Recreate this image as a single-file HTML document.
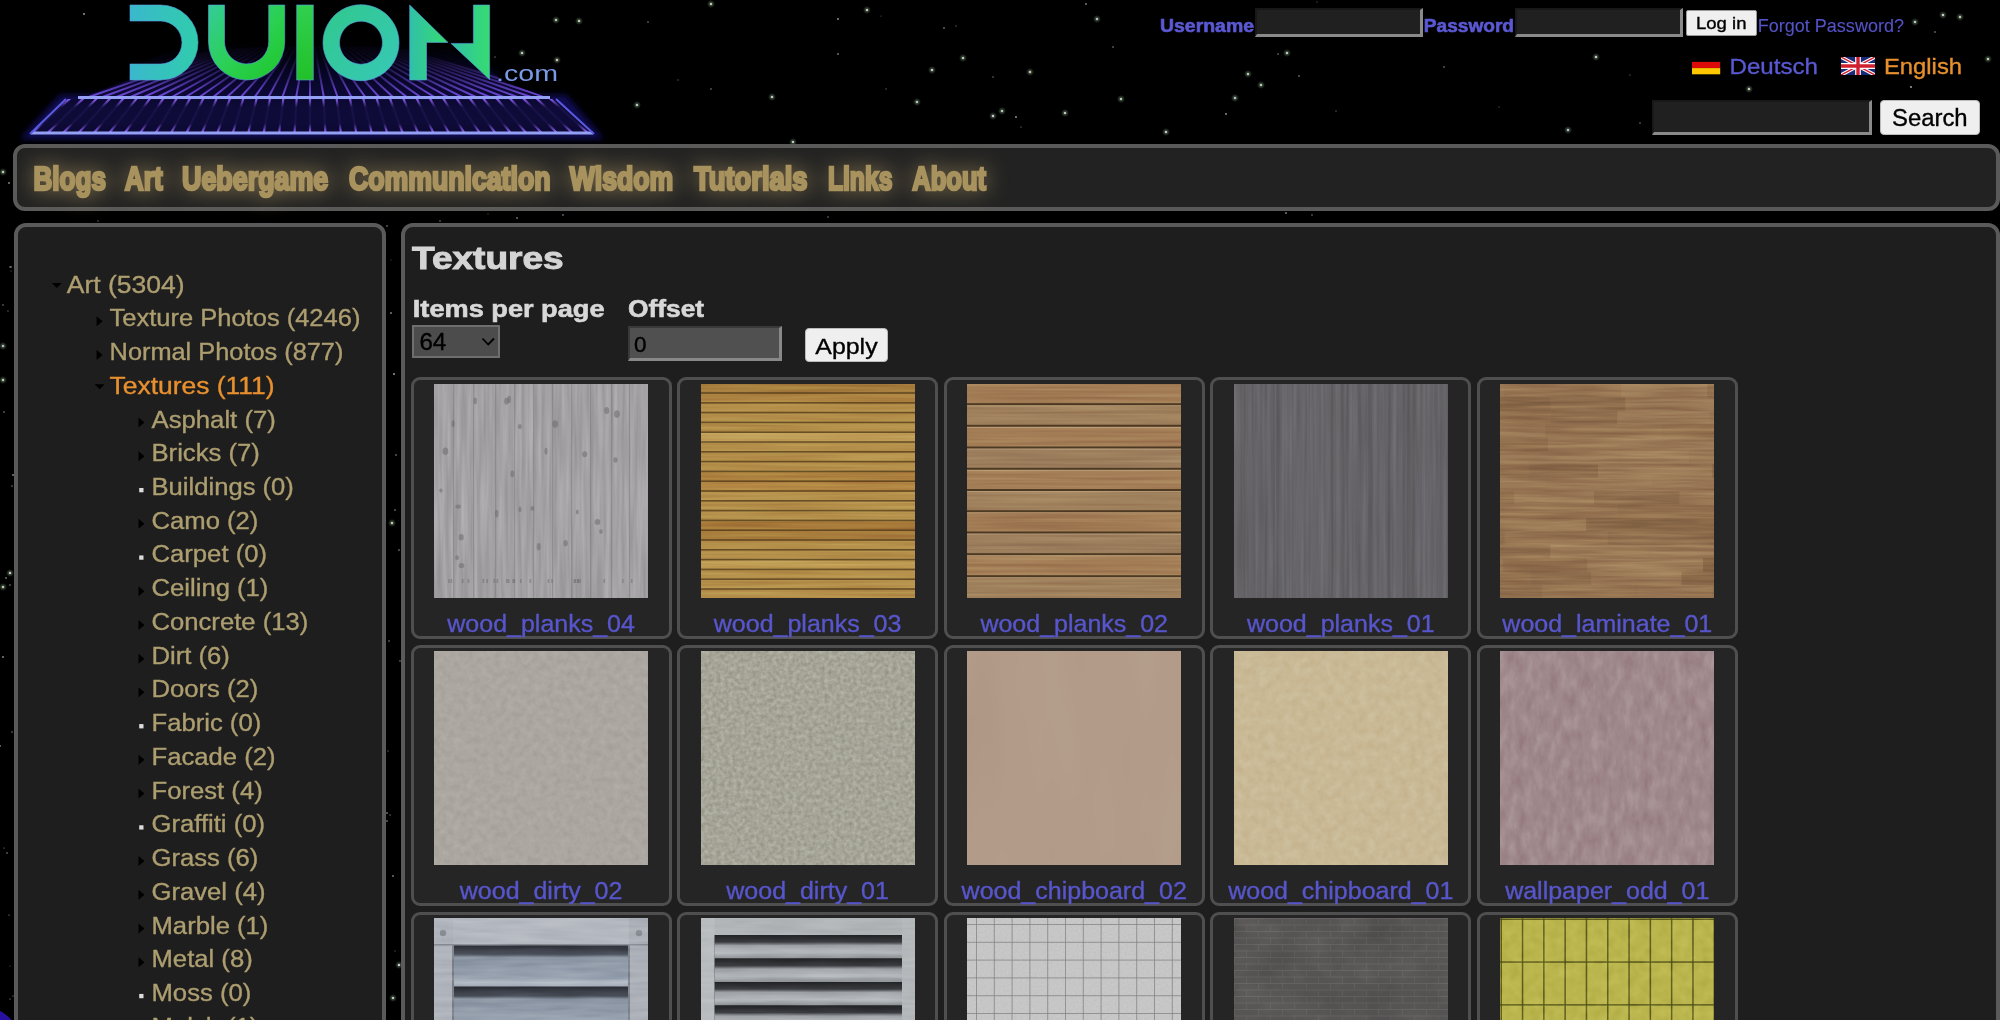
<!DOCTYPE html>
<html><head><meta charset="utf-8"><title>DUION - Textures</title>
<style>
html,body{margin:0;padding:0;}
body{width:2000px;height:1020px;overflow:hidden;background:#000;position:relative;font-family:"Liberation Sans",sans-serif;}
.abs{position:absolute;}
.panel{position:absolute;box-sizing:border-box;border:4px solid #5a5a5a;border-radius:12px;background:#1e1e1e;}
.inp{position:absolute;box-sizing:border-box;background:#202020;border-style:solid;border-width:2px 3px 3px 2px;border-color:#181818 #8a8a8a #8a8a8a #181818;}
.btn{position:absolute;box-sizing:border-box;background:#efefef;border:1px solid #bbb;border-radius:4px;}
.card{position:absolute;box-sizing:border-box;width:261.2px;height:261.5px;border:3px solid #4f4f4f;border-radius:9px;background:#252525;}
.img{position:absolute;width:214px;height:214px;}
svg text{font-family:"Liberation Sans",sans-serif;}

.t1{background:#a5a3a4;}
.t2{background:#b08a42;}
.t3{background:#b48c62;}
.t4{background:#6c6a6c;}
.t5{background:#a07c56;}
.t6{background:#aaa59e;}
.t7{background:#a2a294;}
.t8{background:#b89a86;}
.t9{background:#cbb995;}
.t10{background:#a48a8c;}
.t11{background:#a8aeb4;}
.t12{background:#a0a4a8;}
.t13{background:#c4c4c4;}
.t14{background:#5a5656;}
.t15{background:#b8b450;}
</style></head><body>
<svg class="abs" style="left:0;top:0" width="2000" height="1020"><defs><radialGradient id="sg"><stop offset="0" stop-color="#ffffff" stop-opacity="0.55"/><stop offset="1" stop-color="#aaffaa" stop-opacity="0"/></radialGradient></defs><circle cx="-22" cy="1050" r="45" fill="#2a10a0"/><circle cx="648" cy="22" r="0.9" fill="#ffffff" opacity="0.34"/><circle cx="1166" cy="132" r="4" fill="url(#sg)" opacity="0.8"/><circle cx="1166" cy="132" r="1.1" fill="#ffffff" opacity="0.85"/><circle cx="867" cy="10" r="4" fill="url(#sg)" opacity="0.8"/><circle cx="867" cy="10" r="1.1" fill="#fff8e0" opacity="0.85"/><circle cx="1261" cy="85" r="4" fill="url(#sg)" opacity="0.8"/><circle cx="1261" cy="85" r="1.1" fill="#d8ffd8" opacity="0.85"/><circle cx="793" cy="142" r="4" fill="url(#sg)" opacity="0.8"/><circle cx="793" cy="142" r="1.1" fill="#e8ffe0" opacity="0.85"/><circle cx="579" cy="21" r="4" fill="url(#sg)" opacity="0.8"/><circle cx="579" cy="21" r="1.1" fill="#f0ffd0" opacity="0.85"/><circle cx="1121" cy="99" r="4" fill="url(#sg)" opacity="0.8"/><circle cx="1121" cy="99" r="1.1" fill="#d8ffd8" opacity="0.85"/><circle cx="1278" cy="54" r="0.8" fill="#ffffff" opacity="0.55"/><circle cx="993" cy="77" r="0.8" fill="#fff8e0" opacity="0.48"/><circle cx="1960" cy="17" r="4" fill="url(#sg)" opacity="0.8"/><circle cx="1960" cy="17" r="1.1" fill="#f0ffd0" opacity="0.85"/><circle cx="1336" cy="111" r="0.7" fill="#f0ffd0" opacity="0.44"/><circle cx="993" cy="116" r="4" fill="url(#sg)" opacity="0.8"/><circle cx="993" cy="116" r="1.1" fill="#ffffff" opacity="0.85"/><circle cx="772" cy="97" r="4" fill="url(#sg)" opacity="0.8"/><circle cx="772" cy="97" r="1.1" fill="#fff8e0" opacity="0.85"/><circle cx="711" cy="89" r="0.9" fill="#e8ffe0" opacity="0.35"/><circle cx="495" cy="57" r="0.7" fill="#ffffff" opacity="0.46"/><circle cx="556" cy="20" r="4" fill="url(#sg)" opacity="0.8"/><circle cx="556" cy="20" r="1.1" fill="#d8ffd8" opacity="0.85"/><circle cx="557" cy="60" r="4" fill="url(#sg)" opacity="0.8"/><circle cx="557" cy="60" r="1.1" fill="#fff8e0" opacity="0.85"/><circle cx="1915" cy="22" r="4" fill="url(#sg)" opacity="0.8"/><circle cx="1915" cy="22" r="1.1" fill="#e8ffe0" opacity="0.85"/><circle cx="1317" cy="2" r="0.7" fill="#e8ffe0" opacity="0.30"/><circle cx="838" cy="54" r="0.9" fill="#e8ffe0" opacity="0.51"/><circle cx="1235" cy="98" r="4" fill="url(#sg)" opacity="0.8"/><circle cx="1235" cy="98" r="1.1" fill="#e0e8ff" opacity="0.85"/><circle cx="1596" cy="57" r="4" fill="url(#sg)" opacity="0.8"/><circle cx="1596" cy="57" r="1.1" fill="#ffffff" opacity="0.85"/><circle cx="963" cy="58" r="4" fill="url(#sg)" opacity="0.8"/><circle cx="963" cy="58" r="1.1" fill="#e8ffe0" opacity="0.85"/><circle cx="881" cy="16" r="0.6" fill="#ffffff" opacity="0.36"/><circle cx="1749" cy="89" r="4" fill="url(#sg)" opacity="0.8"/><circle cx="1749" cy="89" r="1.1" fill="#f0ffd0" opacity="0.85"/><circle cx="1911" cy="87" r="0.9" fill="#ffffff" opacity="0.70"/><circle cx="932" cy="70" r="4" fill="url(#sg)" opacity="0.8"/><circle cx="932" cy="70" r="1.1" fill="#ffffff" opacity="0.85"/><circle cx="1499" cy="107" r="0.7" fill="#e0e8ff" opacity="0.31"/><circle cx="1086" cy="4" r="0.9" fill="#e0e8ff" opacity="0.58"/><circle cx="522" cy="53" r="4" fill="url(#sg)" opacity="0.8"/><circle cx="522" cy="53" r="1.1" fill="#e8ffe0" opacity="0.85"/><circle cx="1065" cy="113" r="4" fill="url(#sg)" opacity="0.8"/><circle cx="1065" cy="113" r="1.1" fill="#e8ffe0" opacity="0.85"/><circle cx="1226" cy="114" r="0.9" fill="#e8ffe0" opacity="0.63"/><circle cx="711" cy="4" r="4" fill="url(#sg)" opacity="0.8"/><circle cx="711" cy="4" r="1.1" fill="#f0ffd0" opacity="0.85"/><circle cx="944" cy="28" r="0.8" fill="#f0ffd0" opacity="0.67"/><circle cx="956" cy="26" r="0.6" fill="#f0ffd0" opacity="0.68"/><circle cx="1444" cy="67" r="0.9" fill="#ffffff" opacity="0.37"/><circle cx="1097" cy="19" r="4" fill="url(#sg)" opacity="0.8"/><circle cx="1097" cy="19" r="1.1" fill="#e0e8ff" opacity="0.85"/><circle cx="1299" cy="76" r="1.0" fill="#fff8e0" opacity="0.38"/><circle cx="1002" cy="111" r="4" fill="url(#sg)" opacity="0.8"/><circle cx="1002" cy="111" r="1.1" fill="#d8ffd8" opacity="0.85"/><circle cx="838" cy="19" r="1.0" fill="#f0ffd0" opacity="0.56"/><circle cx="1630" cy="75" r="0.7" fill="#d8ffd8" opacity="0.36"/><circle cx="1021" cy="127" r="0.6" fill="#d8ffd8" opacity="0.62"/><circle cx="1113" cy="47" r="0.8" fill="#d8ffd8" opacity="0.61"/><circle cx="84" cy="14" r="0.9" fill="#ffffff" opacity="0.66"/><circle cx="886" cy="89" r="0.7" fill="#d8ffd8" opacity="0.41"/><circle cx="1016" cy="117" r="0.9" fill="#e8ffe0" opacity="0.65"/><circle cx="1568" cy="130" r="4" fill="url(#sg)" opacity="0.8"/><circle cx="1568" cy="130" r="1.1" fill="#e0e8ff" opacity="0.85"/><circle cx="1287" cy="53" r="4" fill="url(#sg)" opacity="0.8"/><circle cx="1287" cy="53" r="1.1" fill="#e8ffe0" opacity="0.85"/><circle cx="1935" cy="32" r="1.0" fill="#fff8e0" opacity="0.37"/><circle cx="1988" cy="59" r="4" fill="url(#sg)" opacity="0.8"/><circle cx="1988" cy="59" r="1.1" fill="#f0ffd0" opacity="0.85"/><circle cx="637" cy="105" r="4" fill="url(#sg)" opacity="0.8"/><circle cx="637" cy="105" r="1.1" fill="#d8ffd8" opacity="0.85"/><circle cx="917" cy="102" r="4" fill="url(#sg)" opacity="0.8"/><circle cx="917" cy="102" r="1.1" fill="#d8ffd8" opacity="0.85"/><circle cx="1248" cy="74" r="4" fill="url(#sg)" opacity="0.8"/><circle cx="1248" cy="74" r="1.1" fill="#e8ffe0" opacity="0.85"/><circle cx="1943" cy="15" r="4" fill="url(#sg)" opacity="0.8"/><circle cx="1943" cy="15" r="1.1" fill="#ffffff" opacity="0.85"/><circle cx="1640" cy="123" r="0.8" fill="#f0ffd0" opacity="0.51"/><circle cx="1030" cy="72" r="4" fill="url(#sg)" opacity="0.8"/><circle cx="1030" cy="72" r="1.1" fill="#f0ffd0" opacity="0.85"/><circle cx="678" cy="80" r="0.8" fill="#f0ffd0" opacity="0.32"/><circle cx="10" cy="966" r="0.6" fill="#f0ffd0" opacity="0.38"/><circle cx="4" cy="412" r="0.8" fill="#f0ffd0" opacity="0.57"/><circle cx="4" cy="848" r="0.6" fill="#ffffff" opacity="0.59"/><circle cx="8" cy="311" r="0.6" fill="#fff8e0" opacity="0.63"/><circle cx="6" cy="578" r="1.0" fill="#fff8e0" opacity="0.42"/><circle cx="3" cy="346" r="4" fill="url(#sg)" opacity="0.8"/><circle cx="3" cy="346" r="1.1" fill="#e0e8ff" opacity="0.85"/><circle cx="10" cy="267" r="0.9" fill="#ffffff" opacity="0.31"/><circle cx="9" cy="915" r="0.6" fill="#ffffff" opacity="0.64"/><circle cx="12" cy="732" r="0.9" fill="#e8ffe0" opacity="0.32"/><circle cx="3" cy="380" r="4" fill="url(#sg)" opacity="0.8"/><circle cx="3" cy="380" r="1.1" fill="#f0ffd0" opacity="0.85"/><circle cx="13" cy="996" r="0.6" fill="#e8ffe0" opacity="0.65"/><circle cx="3" cy="305" r="0.8" fill="#ffffff" opacity="0.50"/><circle cx="3" cy="587" r="4" fill="url(#sg)" opacity="0.8"/><circle cx="3" cy="587" r="1.1" fill="#f0ffd0" opacity="0.85"/><circle cx="11" cy="271" r="0.6" fill="#fff8e0" opacity="0.42"/><circle cx="3" cy="657" r="0.9" fill="#e8ffe0" opacity="0.59"/><circle cx="12" cy="486" r="0.7" fill="#fff8e0" opacity="0.59"/><circle cx="9" cy="183" r="0.9" fill="#d8ffd8" opacity="0.59"/><circle cx="11" cy="267" r="0.8" fill="#d8ffd8" opacity="0.63"/><circle cx="0" cy="746" r="0.9" fill="#e0e8ff" opacity="0.58"/><circle cx="3" cy="172" r="4" fill="url(#sg)" opacity="0.8"/><circle cx="3" cy="172" r="1.1" fill="#f0ffd0" opacity="0.85"/><circle cx="13" cy="475" r="0.9" fill="#ffffff" opacity="0.55"/><circle cx="10" cy="573" r="4" fill="url(#sg)" opacity="0.8"/><circle cx="10" cy="573" r="1.1" fill="#ffffff" opacity="0.85"/><circle cx="10" cy="585" r="0.8" fill="#e0e8ff" opacity="0.60"/><circle cx="7" cy="853" r="0.9" fill="#e8ffe0" opacity="0.38"/><circle cx="10" cy="999" r="0.6" fill="#fff8e0" opacity="0.66"/><circle cx="391" cy="260" r="0.6" fill="#e8ffe0" opacity="0.36"/><circle cx="390" cy="815" r="0.7" fill="#d8ffd8" opacity="0.49"/><circle cx="393" cy="998" r="4" fill="url(#sg)" opacity="0.8"/><circle cx="393" cy="998" r="1.1" fill="#e8ffe0" opacity="0.85"/><circle cx="396" cy="455" r="0.8" fill="#fff8e0" opacity="0.61"/><circle cx="400" cy="661" r="1.0" fill="#ffffff" opacity="0.31"/><circle cx="393" cy="876" r="1.0" fill="#fff8e0" opacity="0.45"/><circle cx="399" cy="965" r="4" fill="url(#sg)" opacity="0.8"/><circle cx="399" cy="965" r="1.1" fill="#ffffff" opacity="0.85"/><circle cx="389" cy="641" r="0.8" fill="#e8ffe0" opacity="0.55"/><circle cx="391" cy="313" r="1.0" fill="#fff8e0" opacity="0.49"/><circle cx="387" cy="226" r="0.8" fill="#fff8e0" opacity="0.59"/><circle cx="392" cy="523" r="4" fill="url(#sg)" opacity="0.8"/><circle cx="392" cy="523" r="1.1" fill="#f0ffd0" opacity="0.85"/><circle cx="387" cy="821" r="1.0" fill="#ffffff" opacity="0.38"/><circle cx="387" cy="813" r="0.8" fill="#ffffff" opacity="0.70"/><circle cx="395" cy="510" r="0.9" fill="#f0ffd0" opacity="0.41"/><circle cx="388" cy="751" r="0.7" fill="#e8ffe0" opacity="0.41"/><circle cx="394" cy="374" r="1.0" fill="#fff8e0" opacity="0.62"/><circle cx="395" cy="951" r="0.7" fill="#d8ffd8" opacity="0.33"/><circle cx="399" cy="550" r="0.9" fill="#e8ffe0" opacity="0.41"/><circle cx="98" cy="221" r="0.7" fill="#e8ffe0" opacity="0.47"/><circle cx="563" cy="215" r="1.0" fill="#e0e8ff" opacity="0.40"/><circle cx="1312" cy="215" r="0.9" fill="#d8ffd8" opacity="0.35"/><circle cx="1286" cy="213" r="1.0" fill="#d8ffd8" opacity="0.50"/><circle cx="440" cy="221" r="0.8" fill="#fff8e0" opacity="0.52"/><circle cx="488" cy="214" r="0.6" fill="#d8ffd8" opacity="0.40"/><circle cx="517" cy="218" r="0.9" fill="#ffffff" opacity="0.47"/><circle cx="828" cy="217" r="0.7" fill="#fff8e0" opacity="0.60"/></svg>
<svg class="abs" style="left:0;top:0" width="640" height="150" viewBox="0 0 640 150">
<defs>
<linearGradient id="gD" x1="0" y1="0" x2="1" y2="0"><stop offset="0" stop-color="#3ab8cc"/><stop offset="1" stop-color="#30ccac"/></linearGradient>
<linearGradient id="gU" x1="0" y1="0" x2="1" y2="1"><stop offset="0" stop-color="#34cc98"/><stop offset="0.55" stop-color="#2ad050"/><stop offset="1" stop-color="#1ec428"/></linearGradient>
<linearGradient id="gI" x1="0" y1="0" x2="0" y2="1"><stop offset="0" stop-color="#30d050"/><stop offset="1" stop-color="#22c028"/></linearGradient>
<linearGradient id="gO" x1="0" y1="0" x2="1" y2="1"><stop offset="0" stop-color="#30c88c"/><stop offset="1" stop-color="#38c8b8"/></linearGradient>
<linearGradient id="gN" x1="0" y1="0" x2="1" y2="0"><stop offset="0" stop-color="#30c0a8"/><stop offset="1" stop-color="#36dc70"/></linearGradient>
<linearGradient id="band" x1="0" y1="0" x2="0" y2="1"><stop offset="0" stop-color="#0c0830" stop-opacity="0"/><stop offset="0.25" stop-color="#0e0b38" stop-opacity="1"/><stop offset="0.75" stop-color="#0e0b38" stop-opacity="1"/><stop offset="1" stop-color="#0c0830" stop-opacity="0"/></linearGradient>
<linearGradient id="upfade" gradientUnits="userSpaceOnUse" x1="0" y1="40" x2="0" y2="98"><stop offset="0" stop-color="#000" stop-opacity="1"/><stop offset="0.3" stop-color="#02020c" stop-opacity="0.92"/><stop offset="0.65" stop-color="#04031a" stop-opacity="0.55"/><stop offset="1" stop-color="#06041a" stop-opacity="0"/></linearGradient>
<clipPath id="cup"><path d="M79,98 L549,98 L500,80 Q480,46 320,46 Q150,46 130,80 Z"/></clipPath>
<clipPath id="clo"><polygon points="66,99 556,99 594,134 30,134"/></clipPath>
<filter id="glow" x="-20%" y="-100%" width="140%" height="300%"><feGaussianBlur stdDeviation="3"/></filter>
</defs>
<polygon points="60,95 566,95 604,139 20,139" fill="#1a1490" opacity="0.6" filter="url(#glow)"/>
<path d="M79,98 L549,98 L500,80 Q480,46 320,46 Q150,46 130,80 Z" fill="#0c0a38"/>
<g clip-path="url(#cup)" stroke="#7a50ec" stroke-width="2" opacity="0.95"><line x1="310" y1="20" x2="58.0" y2="98" /><line x1="310" y1="20" x2="72.0" y2="98" /><line x1="310" y1="20" x2="86.0" y2="98" /><line x1="310" y1="20" x2="100.0" y2="98" /><line x1="310" y1="20" x2="114.0" y2="98" /><line x1="310" y1="20" x2="128.0" y2="98" /><line x1="310" y1="20" x2="142.0" y2="98" /><line x1="310" y1="20" x2="156.0" y2="98" /><line x1="310" y1="20" x2="170.0" y2="98" /><line x1="310" y1="20" x2="184.0" y2="98" /><line x1="310" y1="20" x2="198.0" y2="98" /><line x1="310" y1="20" x2="212.0" y2="98" /><line x1="310" y1="20" x2="226.0" y2="98" /><line x1="310" y1="20" x2="240.0" y2="98" /><line x1="310" y1="20" x2="254.0" y2="98" /><line x1="310" y1="20" x2="268.0" y2="98" /><line x1="310" y1="20" x2="282.0" y2="98" /><line x1="310" y1="20" x2="296.0" y2="98" /><line x1="310" y1="20" x2="310.0" y2="98" /><line x1="310" y1="20" x2="324.0" y2="98" /><line x1="310" y1="20" x2="338.0" y2="98" /><line x1="310" y1="20" x2="352.0" y2="98" /><line x1="310" y1="20" x2="366.0" y2="98" /><line x1="310" y1="20" x2="380.0" y2="98" /><line x1="310" y1="20" x2="394.0" y2="98" /><line x1="310" y1="20" x2="408.0" y2="98" /><line x1="310" y1="20" x2="422.0" y2="98" /><line x1="310" y1="20" x2="436.0" y2="98" /><line x1="310" y1="20" x2="450.0" y2="98" /><line x1="310" y1="20" x2="464.0" y2="98" /><line x1="310" y1="20" x2="478.0" y2="98" /><line x1="310" y1="20" x2="492.0" y2="98" /><line x1="310" y1="20" x2="506.0" y2="98" /><line x1="310" y1="20" x2="520.0" y2="98" /><line x1="310" y1="20" x2="534.0" y2="98" /><line x1="310" y1="20" x2="548.0" y2="98" /><line x1="310" y1="20" x2="562.0" y2="98" /></g>
<path d="M76,99 L552,99 L504,80 Q484,38 320,38 Q146,38 126,80 Z" fill="url(#upfade)"/>

<polygon points="66,99 556,99 594,134 30,134" fill="#0c0a36"/>
<g clip-path="url(#clo)" stroke="#8a5cf0" stroke-width="2.2"><line x1="310" y1="-120" x2="15.5" y2="134" /><line x1="310" y1="-120" x2="31.0" y2="134" /><line x1="310" y1="-120" x2="46.5" y2="134" /><line x1="310" y1="-120" x2="62.0" y2="134" /><line x1="310" y1="-120" x2="77.5" y2="134" /><line x1="310" y1="-120" x2="93.0" y2="134" /><line x1="310" y1="-120" x2="108.5" y2="134" /><line x1="310" y1="-120" x2="124.0" y2="134" /><line x1="310" y1="-120" x2="139.5" y2="134" /><line x1="310" y1="-120" x2="155.0" y2="134" /><line x1="310" y1="-120" x2="170.5" y2="134" /><line x1="310" y1="-120" x2="186.0" y2="134" /><line x1="310" y1="-120" x2="201.5" y2="134" /><line x1="310" y1="-120" x2="217.0" y2="134" /><line x1="310" y1="-120" x2="232.5" y2="134" /><line x1="310" y1="-120" x2="248.0" y2="134" /><line x1="310" y1="-120" x2="263.5" y2="134" /><line x1="310" y1="-120" x2="279.0" y2="134" /><line x1="310" y1="-120" x2="294.5" y2="134" /><line x1="310" y1="-120" x2="310.0" y2="134" /><line x1="310" y1="-120" x2="325.5" y2="134" /><line x1="310" y1="-120" x2="341.0" y2="134" /><line x1="310" y1="-120" x2="356.5" y2="134" /><line x1="310" y1="-120" x2="372.0" y2="134" /><line x1="310" y1="-120" x2="387.5" y2="134" /><line x1="310" y1="-120" x2="403.0" y2="134" /><line x1="310" y1="-120" x2="418.5" y2="134" /><line x1="310" y1="-120" x2="434.0" y2="134" /><line x1="310" y1="-120" x2="449.5" y2="134" /><line x1="310" y1="-120" x2="465.0" y2="134" /><line x1="310" y1="-120" x2="480.5" y2="134" /><line x1="310" y1="-120" x2="496.0" y2="134" /><line x1="310" y1="-120" x2="511.5" y2="134" /><line x1="310" y1="-120" x2="527.0" y2="134" /><line x1="310" y1="-120" x2="542.5" y2="134" /><line x1="310" y1="-120" x2="558.0" y2="134" /><line x1="310" y1="-120" x2="573.5" y2="134" /><line x1="310" y1="-120" x2="589.0" y2="134" /><line x1="310" y1="-120" x2="604.5" y2="134" /></g>
<rect x="20" y="99" width="600" height="33" fill="url(#band)" clip-path="url(#clo)" opacity="0.92"/>
<rect x="78" y="96" width="472" height="3" fill="#94a0f4"/>
<rect x="31" y="131.5" width="562" height="3" fill="#94a0f4"/>
<path d="M66,99 L30,134 M556,99 L594,134" stroke="#5a5ae0" stroke-width="2"/>
<path d="M130,5 H160.5 A37.5,37.5 0 0 1 160.5,80 H130 V64 H160.5 A21.5,21.5 0 0 0 160.5,21 H130 Z" fill="url(#gD)" stroke="#58a0e0" stroke-width="0.9" stroke-opacity="0.7"/>
<path d="M208.5,5 V41.9 A38.1,38.1 0 0 0 284.7,41.9 V5 H268.7 V41.9 A22.1,22.1 0 0 1 224.5,41.9 V5 Z" fill="url(#gU)" stroke="#58a0e0" stroke-width="0.9" stroke-opacity="0.7"/>
<rect x="296.7" y="5" width="16.6" height="75" fill="url(#gI)" stroke="#58a0e0" stroke-width="0.9" stroke-opacity="0.7"/>
<path d="M361,4.7 a38,38 0 1 0 0.01,0 Z M361,21.2 a21.5,21.5 0 1 1 -0.01,0 Z" fill="url(#gO)" fill-rule="evenodd" stroke="#58a0e0" stroke-width="0.9" stroke-opacity="0.7"/>
<polygon points="409.7,5 448,42.4 426.5,42.4 426.5,80 409.7,80" fill="url(#gN)" stroke="#58a0e0" stroke-width="0.9" stroke-opacity="0.7"/>
<polygon points="473.4,5 489.6,5 489.6,79.6 451,43.4 473.4,43.4" fill="url(#gN)" stroke="#58a0e0" stroke-width="0.9" stroke-opacity="0.7"/>
<text x="496" y="81" font-size="22" fill="#7a9ae8" font-family="Liberation Sans" textLength="62" lengthAdjust="spacingAndGlyphs">.com</text>
</svg>

<svg class="abs" style="left:1692px;top:55px" width="29" height="20"><rect x="0" y="0.5" width="28.2" height="6.4" fill="#000"/><rect x="0" y="6.9" width="28.2" height="6.2" fill="#dd0a0a"/><rect x="0" y="13.1" width="28.2" height="6.2" fill="#ffc800"/></svg>
<svg class="abs" style="left:1841px;top:57px" width="34" height="18" viewBox="0 0 60 30" preserveAspectRatio="none"><rect width="60" height="30" fill="#1a2a78"/><path d="M0,0 L60,30 M60,0 L0,30" stroke="#fff" stroke-width="6"/><path d="M0,0 L60,30 M60,0 L0,30" stroke="#d02030" stroke-width="2.5"/><path d="M30,0 V30 M0,15 H60" stroke="#fff" stroke-width="10"/><path d="M30,0 V30 M0,15 H60" stroke="#d02030" stroke-width="6"/></svg>
<div class="inp" style="left:1255px;top:8px;width:168px;height:29px;"></div>
<div class="inp" style="left:1515px;top:8px;width:168px;height:29px;"></div>
<div class="btn" style="left:1685.7px;top:9.7px;width:71px;height:26px;border-color:#999;border-radius:2px;"></div>
<div class="inp" style="left:1651.7px;top:100px;width:220.5px;height:35.4px;"></div>
<div class="btn" style="left:1880px;top:100.4px;width:99.8px;height:34.2px;"></div>
<div class="panel" style="left:13px;top:144px;width:1987px;height:67px;background:#222;"></div>
<div class="panel" style="left:14.3px;top:223px;width:372.2px;height:900px;"></div>
<div class="panel" style="left:401px;top:223px;width:1599px;height:900px;"></div>
<div class="abs" style="left:411.9px;top:325.25px;width:88.4px;height:32.9px;box-sizing:border-box;background:#4c4c4c;border:2px solid #6e6e6e;"></div>
<div class="inp" style="left:628.1px;top:326.3px;width:153.6px;height:34.6px;background:#505050;border-color:#3a3a3a #888 #888 #3a3a3a;"></div>
<div class="btn" style="left:804.5px;top:327.7px;width:83.5px;height:34.3px;"></div>
<div class="card" style="left:410.5px;top:377.3px"></div><div class="img" style="left:434.2px;top:384.0px"><svg width="214" height="214" style="display:block"><defs><filter id="n1_0" x="0" y="0" width="100%" height="100%" color-interpolation-filters="sRGB"><feTurbulence type="fractalNoise" baseFrequency="0.25 0.012" numOctaves="2" seed="2"/><feColorMatrix type="matrix" values="1 0 0 0 0  1 0 0 0 0  1 0 0 0 0  0 0 0 0 1"/></filter></defs><rect x="0.0" y="0.0" width="214.0" height="214.0" fill="#a3a1a3" opacity="1"/><rect width="214" height="214" filter="url(#n1_0)" opacity="0.22" style="mix-blend-mode:overlay"/><rect x="19.0" y="0.0" width="1.2" height="214.0" fill="#7e7c7e" opacity="0.55"/><rect x="39.0" y="0.0" width="1.2" height="214.0" fill="#7e7c7e" opacity="0.55"/><rect x="61.0" y="0.0" width="1.2" height="214.0" fill="#7e7c7e" opacity="0.55"/><rect x="80.0" y="0.0" width="1.2" height="214.0" fill="#7e7c7e" opacity="0.55"/><rect x="99.0" y="0.0" width="1.2" height="214.0" fill="#7e7c7e" opacity="0.55"/><rect x="118.0" y="0.0" width="1.2" height="214.0" fill="#7e7c7e" opacity="0.55"/><rect x="137.0" y="0.0" width="1.2" height="214.0" fill="#7e7c7e" opacity="0.55"/><rect x="156.0" y="0.0" width="1.2" height="214.0" fill="#7e7c7e" opacity="0.55"/><rect x="177.0" y="0.0" width="1.2" height="214.0" fill="#7e7c7e" opacity="0.55"/><rect x="195.0" y="0.0" width="1.2" height="214.0" fill="#7e7c7e" opacity="0.55"/><ellipse cx="121.2" cy="40.1" rx="2.9" ry="3.8" fill="#6e6c6e" opacity="0.55"/><ellipse cx="98.4" cy="124.4" rx="1.8" ry="2.4" fill="#6e6c6e" opacity="0.55"/><ellipse cx="62.7" cy="129.6" rx="1.8" ry="3.9" fill="#6e6c6e" opacity="0.55"/><ellipse cx="19.1" cy="39.8" rx="1.6" ry="3.5" fill="#6e6c6e" opacity="0.55"/><ellipse cx="78.3" cy="89.9" rx="2.0" ry="3.3" fill="#6e6c6e" opacity="0.55"/><ellipse cx="85.8" cy="42.5" rx="2.1" ry="2.6" fill="#6e6c6e" opacity="0.55"/><ellipse cx="27.2" cy="153.2" rx="2.5" ry="3.3" fill="#6e6c6e" opacity="0.55"/><ellipse cx="181.5" cy="76.0" rx="2.1" ry="2.8" fill="#6e6c6e" opacity="0.55"/><ellipse cx="85.9" cy="125.4" rx="1.5" ry="2.9" fill="#6e6c6e" opacity="0.55"/><ellipse cx="112.0" cy="67.2" rx="1.5" ry="3.4" fill="#6e6c6e" opacity="0.55"/><ellipse cx="6.9" cy="106.6" rx="1.7" ry="2.1" fill="#6e6c6e" opacity="0.55"/><ellipse cx="41.2" cy="16.8" rx="1.7" ry="3.4" fill="#6e6c6e" opacity="0.55"/><ellipse cx="150.7" cy="70.3" rx="2.5" ry="3.0" fill="#6e6c6e" opacity="0.55"/><ellipse cx="104.7" cy="162.7" rx="2.0" ry="3.7" fill="#6e6c6e" opacity="0.55"/><ellipse cx="143.2" cy="128.0" rx="1.5" ry="2.2" fill="#6e6c6e" opacity="0.55"/><ellipse cx="11.4" cy="67.2" rx="2.9" ry="3.8" fill="#6e6c6e" opacity="0.55"/><ellipse cx="172.7" cy="26.4" rx="2.6" ry="3.5" fill="#6e6c6e" opacity="0.55"/><ellipse cx="166.9" cy="147.6" rx="1.7" ry="2.4" fill="#6e6c6e" opacity="0.55"/><ellipse cx="163.5" cy="137.9" rx="2.8" ry="2.9" fill="#6e6c6e" opacity="0.55"/><ellipse cx="182.9" cy="30.1" rx="2.9" ry="3.8" fill="#6e6c6e" opacity="0.55"/><ellipse cx="72.5" cy="17.2" rx="2.3" ry="3.4" fill="#6e6c6e" opacity="0.55"/><ellipse cx="75.1" cy="15.3" rx="1.9" ry="3.6" fill="#6e6c6e" opacity="0.55"/><ellipse cx="23.1" cy="173.7" rx="1.9" ry="2.4" fill="#6e6c6e" opacity="0.55"/><ellipse cx="27.4" cy="181.6" rx="2.9" ry="2.6" fill="#6e6c6e" opacity="0.55"/><ellipse cx="24.1" cy="122.6" rx="2.8" ry="2.0" fill="#6e6c6e" opacity="0.55"/><ellipse cx="131.6" cy="159.2" rx="2.2" ry="3.1" fill="#6e6c6e" opacity="0.55"/><rect x="169.5" y="195.0" width="1.5" height="4.0" fill="#6a686a" opacity="0.5"/><rect x="52.4" y="195.0" width="1.5" height="4.0" fill="#6a686a" opacity="0.5"/><rect x="59.6" y="195.0" width="1.5" height="4.0" fill="#6a686a" opacity="0.5"/><rect x="139.7" y="195.0" width="1.5" height="4.0" fill="#6a686a" opacity="0.5"/><rect x="117.3" y="195.0" width="1.5" height="4.0" fill="#6a686a" opacity="0.5"/><rect x="113.8" y="195.0" width="1.5" height="4.0" fill="#6a686a" opacity="0.5"/><rect x="72.2" y="195.0" width="1.5" height="4.0" fill="#6a686a" opacity="0.5"/><rect x="197.0" y="195.0" width="1.5" height="4.0" fill="#6a686a" opacity="0.5"/><rect x="62.6" y="195.0" width="1.5" height="4.0" fill="#6a686a" opacity="0.5"/><rect x="143.5" y="195.0" width="1.5" height="4.0" fill="#6a686a" opacity="0.5"/><rect x="188.1" y="195.0" width="1.5" height="4.0" fill="#6a686a" opacity="0.5"/><rect x="86.0" y="195.0" width="1.5" height="4.0" fill="#6a686a" opacity="0.5"/><rect x="14.2" y="195.0" width="1.5" height="4.0" fill="#6a686a" opacity="0.5"/><rect x="48.6" y="195.0" width="1.5" height="4.0" fill="#6a686a" opacity="0.5"/><rect x="16.7" y="195.0" width="1.5" height="4.0" fill="#6a686a" opacity="0.5"/><rect x="33.7" y="195.0" width="1.5" height="4.0" fill="#6a686a" opacity="0.5"/><rect x="27.9" y="195.0" width="1.5" height="4.0" fill="#6a686a" opacity="0.5"/><rect x="73.9" y="195.0" width="1.5" height="4.0" fill="#6a686a" opacity="0.5"/><rect x="79.6" y="195.0" width="1.5" height="4.0" fill="#6a686a" opacity="0.5"/><rect x="95.6" y="195.0" width="1.5" height="4.0" fill="#6a686a" opacity="0.5"/><rect x="140.7" y="195.0" width="1.5" height="4.0" fill="#6a686a" opacity="0.5"/><rect x="143.1" y="195.0" width="1.5" height="4.0" fill="#6a686a" opacity="0.5"/><rect x="145.3" y="195.0" width="1.5" height="4.0" fill="#6a686a" opacity="0.5"/><rect x="78.4" y="195.0" width="1.5" height="4.0" fill="#6a686a" opacity="0.5"/></svg></div><div class="card" style="left:677.0px;top:377.3px"></div><div class="img" style="left:700.8px;top:384.0px"><svg width="214" height="214" style="display:block"><defs><filter id="n2_0" x="0" y="0" width="100%" height="100%" color-interpolation-filters="sRGB"><feTurbulence type="fractalNoise" baseFrequency="0.008 0.35" numOctaves="2" seed="3"/><feColorMatrix type="matrix" values="1 0 0 0 0  1 0 0 0 0  1 0 0 0 0  0 0 0 0 1"/></filter></defs><rect x="0.0" y="0.0" width="214.0" height="214.0" fill="#b48f4a" opacity="1"/><rect x="0.0" y="0.0" width="214.0" height="9.8" fill="#9a6e34" opacity="0.6"/><rect x="0.0" y="9.8" width="214.0" height="9.8" fill="#a87c3c" opacity="0.6"/><rect x="0.0" y="49.0" width="214.0" height="9.8" fill="#c8a860" opacity="0.6"/><rect x="0.0" y="88.2" width="214.0" height="9.8" fill="#a87838" opacity="0.6"/><rect x="0.0" y="98.0" width="214.0" height="9.8" fill="#b08040" opacity="0.6"/><rect x="0.0" y="137.2" width="214.0" height="9.8" fill="#a06e30" opacity="0.6"/><rect x="0.0" y="147.0" width="214.0" height="9.8" fill="#9e7034" opacity="0.6"/><rect x="0.0" y="176.4" width="214.0" height="9.8" fill="#c4a458" opacity="0.6"/><rect width="214" height="214" filter="url(#n2_0)" opacity="0.2" style="mix-blend-mode:overlay"/><rect x="0.0" y="8.2" width="214.0" height="1.6" fill="#4e3818" opacity="0.75"/><rect x="0.0" y="18.0" width="214.0" height="1.6" fill="#4e3818" opacity="0.75"/><rect x="0.0" y="27.8" width="214.0" height="1.6" fill="#4e3818" opacity="0.75"/><rect x="0.0" y="37.6" width="214.0" height="1.6" fill="#4e3818" opacity="0.75"/><rect x="0.0" y="47.4" width="214.0" height="1.6" fill="#4e3818" opacity="0.75"/><rect x="0.0" y="57.2" width="214.0" height="1.6" fill="#4e3818" opacity="0.75"/><rect x="0.0" y="67.0" width="214.0" height="1.6" fill="#4e3818" opacity="0.75"/><rect x="0.0" y="76.8" width="214.0" height="1.6" fill="#4e3818" opacity="0.75"/><rect x="0.0" y="86.6" width="214.0" height="1.6" fill="#4e3818" opacity="0.75"/><rect x="0.0" y="96.4" width="214.0" height="1.6" fill="#4e3818" opacity="0.75"/><rect x="0.0" y="106.2" width="214.0" height="1.6" fill="#4e3818" opacity="0.75"/><rect x="0.0" y="116.0" width="214.0" height="1.6" fill="#4e3818" opacity="0.75"/><rect x="0.0" y="125.8" width="214.0" height="1.6" fill="#4e3818" opacity="0.75"/><rect x="0.0" y="135.6" width="214.0" height="1.6" fill="#4e3818" opacity="0.75"/><rect x="0.0" y="145.4" width="214.0" height="1.6" fill="#4e3818" opacity="0.75"/><rect x="0.0" y="155.2" width="214.0" height="1.6" fill="#4e3818" opacity="0.75"/><rect x="0.0" y="165.0" width="214.0" height="1.6" fill="#4e3818" opacity="0.75"/><rect x="0.0" y="174.8" width="214.0" height="1.6" fill="#4e3818" opacity="0.75"/><rect x="0.0" y="184.6" width="214.0" height="1.6" fill="#4e3818" opacity="0.75"/><rect x="0.0" y="194.4" width="214.0" height="1.6" fill="#4e3818" opacity="0.75"/><rect x="0.0" y="204.2" width="214.0" height="1.6" fill="#4e3818" opacity="0.75"/></svg></div><div class="card" style="left:943.6px;top:377.3px"></div><div class="img" style="left:967.3px;top:384.0px"><svg width="214" height="214" style="display:block"><defs><filter id="n3_0" x="0" y="0" width="100%" height="100%" color-interpolation-filters="sRGB"><feTurbulence type="fractalNoise" baseFrequency="0.006 0.3" numOctaves="2" seed="4"/><feColorMatrix type="matrix" values="1 0 0 0 0  1 0 0 0 0  1 0 0 0 0  0 0 0 0 1"/></filter></defs><rect x="0.0" y="0.0" width="214.0" height="214.0" fill="#a27f5a" opacity="1"/><rect x="0.0" y="0.0" width="214.0" height="21.5" fill="#a47c54" opacity="0.7"/><rect x="0.0" y="20.2" width="214.0" height="21.5" fill="#9e805c" opacity="0.7"/><rect x="0.0" y="41.8" width="214.0" height="21.5" fill="#a27a52" opacity="0.7"/><rect x="0.0" y="63.5" width="214.0" height="21.5" fill="#9a7e5e" opacity="0.7"/><rect x="0.0" y="84.8" width="214.0" height="21.5" fill="#a47c54" opacity="0.7"/><rect x="0.0" y="106.0" width="214.0" height="21.5" fill="#9e805c" opacity="0.7"/><rect x="0.0" y="127.2" width="214.0" height="21.5" fill="#a27a52" opacity="0.7"/><rect x="0.0" y="148.5" width="214.0" height="21.5" fill="#9a7e5e" opacity="0.7"/><rect x="0.0" y="170.2" width="214.0" height="21.5" fill="#a47c54" opacity="0.7"/><rect x="0.0" y="192.2" width="214.0" height="21.5" fill="#9e805c" opacity="0.7"/><rect width="214" height="214" filter="url(#n3_0)" opacity="0.2" style="mix-blend-mode:overlay"/><rect x="0.0" y="19.2" width="214.0" height="2.0" fill="#3e2e1a" opacity="0.85"/><rect x="0.0" y="21.2" width="214.0" height="1.2" fill="#d0b894" opacity="0.45"/><rect x="0.0" y="40.8" width="214.0" height="2.0" fill="#3e2e1a" opacity="0.85"/><rect x="0.0" y="42.8" width="214.0" height="1.2" fill="#d0b894" opacity="0.45"/><rect x="0.0" y="62.5" width="214.0" height="2.0" fill="#3e2e1a" opacity="0.85"/><rect x="0.0" y="64.5" width="214.0" height="1.2" fill="#d0b894" opacity="0.45"/><rect x="0.0" y="83.8" width="214.0" height="2.0" fill="#3e2e1a" opacity="0.85"/><rect x="0.0" y="85.8" width="214.0" height="1.2" fill="#d0b894" opacity="0.45"/><rect x="0.0" y="105.0" width="214.0" height="2.0" fill="#3e2e1a" opacity="0.85"/><rect x="0.0" y="107.0" width="214.0" height="1.2" fill="#d0b894" opacity="0.45"/><rect x="0.0" y="126.2" width="214.0" height="2.0" fill="#3e2e1a" opacity="0.85"/><rect x="0.0" y="128.2" width="214.0" height="1.2" fill="#d0b894" opacity="0.45"/><rect x="0.0" y="147.5" width="214.0" height="2.0" fill="#3e2e1a" opacity="0.85"/><rect x="0.0" y="149.5" width="214.0" height="1.2" fill="#d0b894" opacity="0.45"/><rect x="0.0" y="169.2" width="214.0" height="2.0" fill="#3e2e1a" opacity="0.85"/><rect x="0.0" y="171.2" width="214.0" height="1.2" fill="#d0b894" opacity="0.45"/><rect x="0.0" y="191.2" width="214.0" height="2.0" fill="#3e2e1a" opacity="0.85"/><rect x="0.0" y="193.2" width="214.0" height="1.2" fill="#d0b894" opacity="0.45"/></svg></div><div class="card" style="left:1210.2px;top:377.3px"></div><div class="img" style="left:1233.9px;top:384.0px"><svg width="214" height="214" style="display:block"><defs><filter id="n4_0" x="0" y="0" width="100%" height="100%" color-interpolation-filters="sRGB"><feTurbulence type="fractalNoise" baseFrequency="0.3 0.01" numOctaves="2" seed="5"/><feColorMatrix type="matrix" values="1 0 0 0 0  1 0 0 0 0  1 0 0 0 0  0 0 0 0 1"/></filter></defs><rect x="0.0" y="0.0" width="214.0" height="214.0" fill="#656367" opacity="1"/><rect x="0.0" y="0.0" width="3.9" height="214.0" fill="#6a686c" opacity="0.7"/><rect x="6.4" y="0.0" width="2.1" height="214.0" fill="#605e62" opacity="0.7"/><rect x="9.4" y="0.0" width="1.8" height="214.0" fill="#5c5a5e" opacity="0.7"/><rect x="14.1" y="0.0" width="1.8" height="214.0" fill="#6a686c" opacity="0.7"/><rect x="17.1" y="0.0" width="3.1" height="214.0" fill="#605e62" opacity="0.7"/><rect x="22.0" y="0.0" width="1.7" height="214.0" fill="#6a686c" opacity="0.7"/><rect x="25.8" y="0.0" width="2.5" height="214.0" fill="#605e62" opacity="0.7"/><rect x="31.1" y="0.0" width="1.9" height="214.0" fill="#605e62" opacity="0.7"/><rect x="34.9" y="0.0" width="2.7" height="214.0" fill="#6a686c" opacity="0.7"/><rect x="39.1" y="0.0" width="1.9" height="214.0" fill="#5c5a5e" opacity="0.7"/><rect x="42.2" y="0.0" width="3.0" height="214.0" fill="#5c5a5e" opacity="0.7"/><rect x="47.9" y="0.0" width="2.1" height="214.0" fill="#6e6c70" opacity="0.7"/><rect x="51.7" y="0.0" width="1.7" height="214.0" fill="#6a686c" opacity="0.7"/><rect x="56.0" y="0.0" width="1.7" height="214.0" fill="#6e6c70" opacity="0.7"/><rect x="60.3" y="0.0" width="2.9" height="214.0" fill="#6a686c" opacity="0.7"/><rect x="66.0" y="0.0" width="4.0" height="214.0" fill="#6a686c" opacity="0.7"/><rect x="72.8" y="0.0" width="2.0" height="214.0" fill="#6e6c70" opacity="0.7"/><rect x="75.8" y="0.0" width="2.7" height="214.0" fill="#6a686c" opacity="0.7"/><rect x="80.7" y="0.0" width="1.7" height="214.0" fill="#6a686c" opacity="0.7"/><rect x="83.5" y="0.0" width="1.8" height="214.0" fill="#6a686c" opacity="0.7"/><rect x="86.6" y="0.0" width="2.7" height="214.0" fill="#6e6c70" opacity="0.7"/><rect x="91.5" y="0.0" width="2.9" height="214.0" fill="#6a686c" opacity="0.7"/><rect x="96.9" y="0.0" width="2.3" height="214.0" fill="#5c5a5e" opacity="0.7"/><rect x="101.8" y="0.0" width="3.7" height="214.0" fill="#6e6c70" opacity="0.7"/><rect x="107.6" y="0.0" width="2.8" height="214.0" fill="#5c5a5e" opacity="0.7"/><rect x="112.6" y="0.0" width="1.6" height="214.0" fill="#5c5a5e" opacity="0.7"/><rect x="115.5" y="0.0" width="2.7" height="214.0" fill="#6e6c70" opacity="0.7"/><rect x="119.5" y="0.0" width="2.0" height="214.0" fill="#6a686c" opacity="0.7"/><rect x="123.7" y="0.0" width="3.5" height="214.0" fill="#605e62" opacity="0.7"/><rect x="128.4" y="0.0" width="3.5" height="214.0" fill="#6a686c" opacity="0.7"/><rect x="134.2" y="0.0" width="3.6" height="214.0" fill="#5c5a5e" opacity="0.7"/><rect x="139.6" y="0.0" width="3.6" height="214.0" fill="#6a686c" opacity="0.7"/><rect x="145.0" y="0.0" width="2.9" height="214.0" fill="#6a686c" opacity="0.7"/><rect x="149.0" y="0.0" width="2.0" height="214.0" fill="#6a686c" opacity="0.7"/><rect x="153.7" y="0.0" width="3.0" height="214.0" fill="#5c5a5e" opacity="0.7"/><rect x="159.2" y="0.0" width="3.1" height="214.0" fill="#6e6c70" opacity="0.7"/><rect x="164.2" y="0.0" width="2.1" height="214.0" fill="#6a686c" opacity="0.7"/><rect x="168.3" y="0.0" width="3.3" height="214.0" fill="#5c5a5e" opacity="0.7"/><rect x="172.7" y="0.0" width="3.7" height="214.0" fill="#5c5a5e" opacity="0.7"/><rect x="178.2" y="0.0" width="2.9" height="214.0" fill="#5c5a5e" opacity="0.7"/><rect x="183.1" y="0.0" width="2.5" height="214.0" fill="#6a686c" opacity="0.7"/><rect x="188.4" y="0.0" width="3.0" height="214.0" fill="#6e6c70" opacity="0.7"/><rect x="193.0" y="0.0" width="3.7" height="214.0" fill="#6a686c" opacity="0.7"/><rect x="198.7" y="0.0" width="1.6" height="214.0" fill="#6a686c" opacity="0.7"/><rect x="202.3" y="0.0" width="1.5" height="214.0" fill="#605e62" opacity="0.7"/><rect x="205.6" y="0.0" width="1.6" height="214.0" fill="#605e62" opacity="0.7"/><rect x="209.3" y="0.0" width="2.6" height="214.0" fill="#6a686c" opacity="0.7"/><rect x="213.2" y="0.0" width="2.7" height="214.0" fill="#5c5a5e" opacity="0.7"/><rect width="214" height="214" filter="url(#n4_0)" opacity="0.1" style="mix-blend-mode:overlay"/></svg></div><div class="card" style="left:1476.7px;top:377.3px"></div><div class="img" style="left:1500.4px;top:384.0px"><svg width="214" height="214" style="display:block"><defs><filter id="n5_0" x="0" y="0" width="100%" height="100%" color-interpolation-filters="sRGB"><feTurbulence type="fractalNoise" baseFrequency="0.01 0.25" numOctaves="3" seed="6"/><feColorMatrix type="matrix" values="1 0 0 0 0  1 0 0 0 0  1 0 0 0 0  0 0 0 0 1"/></filter></defs><rect x="0.0" y="0.0" width="214.0" height="214.0" fill="#927150" opacity="1"/><rect x="-70.2" y="0.0" width="74.4" height="13.4" fill="#9a7856" opacity="0.75"/><rect x="4.2" y="0.0" width="116.6" height="13.4" fill="#967452" opacity="0.75"/><rect x="120.8" y="0.0" width="86.7" height="13.4" fill="#9c7c58" opacity="0.75"/><rect x="207.5" y="0.0" width="73.4" height="13.4" fill="#8c6c4c" opacity="0.75"/><rect x="-68.0" y="13.4" width="61.6" height="13.4" fill="#8c6c4c" opacity="0.75"/><rect x="-6.4" y="13.4" width="57.0" height="13.4" fill="#866646" opacity="0.75"/><rect x="50.6" y="13.4" width="74.6" height="13.4" fill="#8c6c4c" opacity="0.75"/><rect x="125.2" y="13.4" width="109.3" height="13.4" fill="#9c7c58" opacity="0.75"/><rect x="-30.9" y="26.8" width="82.2" height="13.4" fill="#92704e" opacity="0.75"/><rect x="51.3" y="26.8" width="65.9" height="13.4" fill="#8c6c4c" opacity="0.75"/><rect x="117.2" y="26.8" width="92.8" height="13.4" fill="#9c7c58" opacity="0.75"/><rect x="210.1" y="26.8" width="114.2" height="13.4" fill="#9a7856" opacity="0.75"/><rect x="-74.4" y="40.2" width="119.9" height="13.4" fill="#9c7c58" opacity="0.75"/><rect x="45.6" y="40.2" width="116.0" height="13.4" fill="#967452" opacity="0.75"/><rect x="161.5" y="40.2" width="107.6" height="13.4" fill="#92704e" opacity="0.75"/><rect x="-70.4" y="53.6" width="118.3" height="13.4" fill="#92704e" opacity="0.75"/><rect x="48.0" y="53.6" width="115.3" height="13.4" fill="#9c7c58" opacity="0.75"/><rect x="163.2" y="53.6" width="111.5" height="13.4" fill="#9c7c58" opacity="0.75"/><rect x="-60.8" y="67.0" width="93.8" height="13.4" fill="#9c7c58" opacity="0.75"/><rect x="33.0" y="67.0" width="86.1" height="13.4" fill="#9c7c58" opacity="0.75"/><rect x="119.1" y="67.0" width="70.2" height="13.4" fill="#9c7c58" opacity="0.75"/><rect x="189.3" y="67.0" width="98.9" height="13.4" fill="#9a7856" opacity="0.75"/><rect x="-45.4" y="80.4" width="75.1" height="13.4" fill="#92704e" opacity="0.75"/><rect x="29.7" y="80.4" width="68.4" height="13.4" fill="#8c6c4c" opacity="0.75"/><rect x="98.0" y="80.4" width="114.5" height="13.4" fill="#9c7c58" opacity="0.75"/><rect x="212.5" y="80.4" width="83.7" height="13.4" fill="#866646" opacity="0.75"/><rect x="-69.4" y="93.8" width="117.7" height="13.4" fill="#9c7c58" opacity="0.75"/><rect x="48.3" y="93.8" width="103.7" height="13.4" fill="#9c7c58" opacity="0.75"/><rect x="152.0" y="93.8" width="63.4" height="13.4" fill="#9a7856" opacity="0.75"/><rect x="-48.8" y="107.2" width="63.0" height="13.4" fill="#92704e" opacity="0.75"/><rect x="14.2" y="107.2" width="79.8" height="13.4" fill="#9c7c58" opacity="0.75"/><rect x="94.0" y="107.2" width="85.4" height="13.4" fill="#8c6c4c" opacity="0.75"/><rect x="179.4" y="107.2" width="96.0" height="13.4" fill="#9a7856" opacity="0.75"/><rect x="-55.7" y="120.6" width="55.4" height="13.4" fill="#9c7c58" opacity="0.75"/><rect x="-0.3" y="120.6" width="118.4" height="13.4" fill="#967452" opacity="0.75"/><rect x="118.0" y="120.6" width="96.0" height="13.4" fill="#92704e" opacity="0.75"/><rect x="214.0" y="120.6" width="114.6" height="13.4" fill="#866646" opacity="0.75"/><rect x="-24.2" y="134.0" width="110.4" height="13.4" fill="#9a7856" opacity="0.75"/><rect x="86.2" y="134.0" width="114.3" height="13.4" fill="#866646" opacity="0.75"/><rect x="200.6" y="134.0" width="105.8" height="13.4" fill="#866646" opacity="0.75"/><rect x="-69.3" y="147.4" width="73.8" height="13.4" fill="#8c6c4c" opacity="0.75"/><rect x="4.5" y="147.4" width="103.3" height="13.4" fill="#967452" opacity="0.75"/><rect x="107.8" y="147.4" width="111.7" height="13.4" fill="#8c6c4c" opacity="0.75"/><rect x="-60.1" y="160.8" width="110.4" height="13.4" fill="#8c6c4c" opacity="0.75"/><rect x="50.3" y="160.8" width="99.0" height="13.4" fill="#9c7c58" opacity="0.75"/><rect x="149.3" y="160.8" width="64.8" height="13.4" fill="#9c7c58" opacity="0.75"/><rect x="-66.4" y="174.2" width="69.4" height="13.4" fill="#9a7856" opacity="0.75"/><rect x="3.1" y="174.2" width="84.1" height="13.4" fill="#92704e" opacity="0.75"/><rect x="87.2" y="174.2" width="115.9" height="13.4" fill="#9c7c58" opacity="0.75"/><rect x="203.1" y="174.2" width="87.4" height="13.4" fill="#866646" opacity="0.75"/><rect x="-60.9" y="187.6" width="92.1" height="13.4" fill="#92704e" opacity="0.75"/><rect x="31.1" y="187.6" width="60.0" height="13.4" fill="#8c6c4c" opacity="0.75"/><rect x="91.1" y="187.6" width="90.4" height="13.4" fill="#9a7856" opacity="0.75"/><rect x="181.6" y="187.6" width="95.4" height="13.4" fill="#866646" opacity="0.75"/><rect x="-67.9" y="201.0" width="109.9" height="13.4" fill="#8c6c4c" opacity="0.75"/><rect x="42.0" y="201.0" width="96.4" height="13.4" fill="#967452" opacity="0.75"/><rect x="138.4" y="201.0" width="74.4" height="13.4" fill="#9a7856" opacity="0.75"/><rect x="212.8" y="201.0" width="63.3" height="13.4" fill="#92704e" opacity="0.75"/><rect width="214" height="214" filter="url(#n5_0)" opacity="0.25" style="mix-blend-mode:overlay"/></svg></div><div class="card" style="left:410.5px;top:644.5px"></div><div class="img" style="left:434.2px;top:651.2px"><svg width="214" height="214" style="display:block"><defs><filter id="n6_0" x="0" y="0" width="100%" height="100%" color-interpolation-filters="sRGB"><feTurbulence type="fractalNoise" baseFrequency="0.15" numOctaves="4" seed="7"/><feColorMatrix type="matrix" values="1 0 0 0 0  1 0 0 0 0  1 0 0 0 0  0 0 0 0 1"/></filter></defs><rect x="0.0" y="0.0" width="214.0" height="214.0" fill="#aba69f" opacity="1"/><rect width="214" height="214" filter="url(#n6_0)" opacity="0.12" style="mix-blend-mode:overlay"/></svg></div><div class="card" style="left:677.0px;top:644.5px"></div><div class="img" style="left:700.8px;top:651.2px"><svg width="214" height="214" style="display:block"><defs><filter id="n7_0" x="0" y="0" width="100%" height="100%" color-interpolation-filters="sRGB"><feTurbulence type="fractalNoise" baseFrequency="0.25" numOctaves="3" seed="8"/><feColorMatrix type="matrix" values="1 0 0 0 0  1 0 0 0 0  1 0 0 0 0  0 0 0 0 1"/></filter></defs><rect x="0.0" y="0.0" width="214.0" height="214.0" fill="#a5a497" opacity="1"/><rect width="214" height="214" filter="url(#n7_0)" opacity="0.28" style="mix-blend-mode:overlay"/></svg></div><div class="card" style="left:943.6px;top:644.5px"></div><div class="img" style="left:967.3px;top:651.2px"><svg width="214" height="214" style="display:block"><defs><filter id="n8_0" x="0" y="0" width="100%" height="100%" color-interpolation-filters="sRGB"><feTurbulence type="fractalNoise" baseFrequency="0.02 0.004" numOctaves="2" seed="9"/><feColorMatrix type="matrix" values="1 0 0 0 0  1 0 0 0 0  1 0 0 0 0  0 0 0 0 1"/></filter></defs><rect x="0.0" y="0.0" width="214.0" height="214.0" fill="#b29b89" opacity="1"/><rect width="214" height="214" filter="url(#n8_0)" opacity="0.06" style="mix-blend-mode:overlay"/></svg></div><div class="card" style="left:1210.2px;top:644.5px"></div><div class="img" style="left:1233.9px;top:651.2px"><svg width="214" height="214" style="display:block"><defs><filter id="n9_0" x="0" y="0" width="100%" height="100%" color-interpolation-filters="sRGB"><feTurbulence type="fractalNoise" baseFrequency="0.12" numOctaves="4" seed="10"/><feColorMatrix type="matrix" values="1 0 0 0 0  1 0 0 0 0  1 0 0 0 0  0 0 0 0 1"/></filter></defs><rect x="0.0" y="0.0" width="214.0" height="214.0" fill="#c9b995" opacity="1"/><rect width="214" height="214" filter="url(#n9_0)" opacity="0.14" style="mix-blend-mode:overlay"/></svg></div><div class="card" style="left:1476.7px;top:644.5px"></div><div class="img" style="left:1500.4px;top:651.2px"><svg width="214" height="214" style="display:block"><defs><filter id="n10_0" x="0" y="0" width="100%" height="100%" color-interpolation-filters="sRGB"><feTurbulence type="fractalNoise" baseFrequency="0.12 0.05" numOctaves="4" seed="11"/><feColorMatrix type="matrix" values="1 0 0 0 0  1 0 0 0 0  1 0 0 0 0  0 0 0 0 1"/></filter></defs><rect x="0.0" y="0.0" width="214.0" height="214.0" fill="#9f888c" opacity="1"/><rect width="214" height="214" filter="url(#n10_0)" opacity="0.16" style="mix-blend-mode:overlay"/></svg></div><div class="card" style="left:410.5px;top:911.7px"></div><div class="img" style="left:434.2px;top:918.4px"><svg width="214" height="214" style="display:block"><defs><linearGradient id="sl11" x1="0" y1="0" x2="0" y2="1"><stop offset="0" stop-color="#2a2c34"/><stop offset="0.22" stop-color="#4a505a"/><stop offset="0.3" stop-color="#8a94a2"/><stop offset="0.8" stop-color="#98a2b0"/><stop offset="0.9" stop-color="#b4bcc6"/><stop offset="1" stop-color="#a0a8b4"/></linearGradient><filter id="n11_1" x="0" y="0" width="100%" height="100%" color-interpolation-filters="sRGB"><feTurbulence type="fractalNoise" baseFrequency="0.02 0.2" numOctaves="2" seed="12"/><feColorMatrix type="matrix" values="1 0 0 0 0  1 0 0 0 0  1 0 0 0 0  0 0 0 0 1"/></filter></defs><rect x="19" y="27" width="176" height="41.7" fill="url(#sl11)"/><rect x="19" y="68.7" width="176" height="41.7" fill="url(#sl11)"/><rect x="19" y="110.4" width="176" height="41.7" fill="url(#sl11)"/><rect x="19" y="152.10000000000002" width="176" height="41.7" fill="url(#sl11)"/><rect x="19" y="193.8" width="176" height="41.7" fill="url(#sl11)"/><rect x="0.0" y="0.0" width="214.0" height="27.0" fill="#b4b8c0" opacity="1"/><rect x="0.0" y="0.0" width="19.0" height="214.0" fill="#b0b4bc" opacity="1"/><rect x="195.0" y="0.0" width="19.0" height="214.0" fill="#acb0b8" opacity="1"/><rect x="18.0" y="27.0" width="2.0" height="214.0" fill="#80848c" opacity="1"/><rect x="194.0" y="27.0" width="2.0" height="214.0" fill="#80848c" opacity="1"/><rect x="0.0" y="26.0" width="214.0" height="1.5" fill="#8a8e96" opacity="1"/><circle cx="9" cy="15" r="3.2" fill="#8a8e94"/><circle cx="205" cy="15" r="3.2" fill="#8a8e94"/><rect width="214" height="214" filter="url(#n11_1)" opacity="0.15" style="mix-blend-mode:overlay"/></svg></div><div class="card" style="left:677.0px;top:911.7px"></div><div class="img" style="left:700.8px;top:918.4px"><svg width="214" height="214" style="display:block"><defs><linearGradient id="sl12" x1="0" y1="0" x2="0" y2="1"><stop offset="0" stop-color="#202224"/><stop offset="0.3" stop-color="#3a3c40"/><stop offset="0.45" stop-color="#a0a4a8"/><stop offset="0.75" stop-color="#b4b8bc"/><stop offset="1" stop-color="#8c9094"/></linearGradient><filter id="n12_1" x="0" y="0" width="100%" height="100%" color-interpolation-filters="sRGB"><feTurbulence type="fractalNoise" baseFrequency="0.02 0.2" numOctaves="2" seed="13"/><feColorMatrix type="matrix" values="1 0 0 0 0  1 0 0 0 0  1 0 0 0 0  0 0 0 0 1"/></filter></defs><rect x="13.5" y="17" width="187.5" height="23.5" fill="url(#sl12)"/><rect x="13.5" y="40.5" width="187.5" height="23.5" fill="url(#sl12)"/><rect x="13.5" y="64.0" width="187.5" height="23.5" fill="url(#sl12)"/><rect x="13.5" y="87.5" width="187.5" height="23.5" fill="url(#sl12)"/><rect x="13.5" y="111.0" width="187.5" height="23.5" fill="url(#sl12)"/><rect x="13.5" y="134.5" width="187.5" height="23.5" fill="url(#sl12)"/><rect x="13.5" y="158.0" width="187.5" height="23.5" fill="url(#sl12)"/><rect x="13.5" y="181.5" width="187.5" height="23.5" fill="url(#sl12)"/><rect x="13.5" y="205.0" width="187.5" height="23.5" fill="url(#sl12)"/><rect x="0.0" y="0.0" width="214.0" height="17.0" fill="#b0b4b6" opacity="1"/><rect x="0.0" y="0.0" width="13.5" height="214.0" fill="#b8bcbe" opacity="1"/><rect x="201.0" y="0.0" width="13.0" height="214.0" fill="#b4b8ba" opacity="1"/><rect width="214" height="214" filter="url(#n12_1)" opacity="0.15" style="mix-blend-mode:overlay"/></svg></div><div class="card" style="left:943.6px;top:911.7px"></div><div class="img" style="left:967.3px;top:918.4px"><svg width="214" height="214" style="display:block"><defs><filter id="n13_0" x="0" y="0" width="100%" height="100%" color-interpolation-filters="sRGB"><feTurbulence type="fractalNoise" baseFrequency="0.5" numOctaves="2" seed="14"/><feColorMatrix type="matrix" values="1 0 0 0 0  1 0 0 0 0  1 0 0 0 0  0 0 0 0 1"/></filter></defs><rect x="0.0" y="0.0" width="214.0" height="214.0" fill="#c6c6c6" opacity="1"/><rect width="214" height="214" filter="url(#n13_0)" opacity="0.12" style="mix-blend-mode:overlay"/><rect x="9.0" y="0.0" width="1.0" height="214.0" fill="#7e7e7e" opacity="0.7"/><rect x="0.0" y="6.0" width="214.0" height="1.0" fill="#7e7e7e" opacity="0.7"/><rect x="26.8" y="0.0" width="1.0" height="214.0" fill="#7e7e7e" opacity="0.7"/><rect x="0.0" y="23.8" width="214.0" height="1.0" fill="#7e7e7e" opacity="0.7"/><rect x="44.6" y="0.0" width="1.0" height="214.0" fill="#7e7e7e" opacity="0.7"/><rect x="0.0" y="41.6" width="214.0" height="1.0" fill="#7e7e7e" opacity="0.7"/><rect x="62.4" y="0.0" width="1.0" height="214.0" fill="#7e7e7e" opacity="0.7"/><rect x="0.0" y="59.4" width="214.0" height="1.0" fill="#7e7e7e" opacity="0.7"/><rect x="80.2" y="0.0" width="1.0" height="214.0" fill="#7e7e7e" opacity="0.7"/><rect x="0.0" y="77.2" width="214.0" height="1.0" fill="#7e7e7e" opacity="0.7"/><rect x="98.0" y="0.0" width="1.0" height="214.0" fill="#7e7e7e" opacity="0.7"/><rect x="0.0" y="95.0" width="214.0" height="1.0" fill="#7e7e7e" opacity="0.7"/><rect x="115.8" y="0.0" width="1.0" height="214.0" fill="#7e7e7e" opacity="0.7"/><rect x="0.0" y="112.8" width="214.0" height="1.0" fill="#7e7e7e" opacity="0.7"/><rect x="133.6" y="0.0" width="1.0" height="214.0" fill="#7e7e7e" opacity="0.7"/><rect x="0.0" y="130.6" width="214.0" height="1.0" fill="#7e7e7e" opacity="0.7"/><rect x="151.4" y="0.0" width="1.0" height="214.0" fill="#7e7e7e" opacity="0.7"/><rect x="0.0" y="148.4" width="214.0" height="1.0" fill="#7e7e7e" opacity="0.7"/><rect x="169.2" y="0.0" width="1.0" height="214.0" fill="#7e7e7e" opacity="0.7"/><rect x="0.0" y="166.2" width="214.0" height="1.0" fill="#7e7e7e" opacity="0.7"/><rect x="187.0" y="0.0" width="1.0" height="214.0" fill="#7e7e7e" opacity="0.7"/><rect x="0.0" y="184.0" width="214.0" height="1.0" fill="#7e7e7e" opacity="0.7"/><rect x="204.8" y="0.0" width="1.0" height="214.0" fill="#7e7e7e" opacity="0.7"/><rect x="0.0" y="201.8" width="214.0" height="1.0" fill="#7e7e7e" opacity="0.7"/><rect x="222.6" y="0.0" width="1.0" height="214.0" fill="#7e7e7e" opacity="0.7"/><rect x="0.0" y="219.6" width="214.0" height="1.0" fill="#7e7e7e" opacity="0.7"/></svg></div><div class="card" style="left:1210.2px;top:911.7px"></div><div class="img" style="left:1233.9px;top:918.4px"><svg width="214" height="214" style="display:block"><defs><filter id="n14_0" x="0" y="0" width="100%" height="100%" color-interpolation-filters="sRGB"><feTurbulence type="fractalNoise" baseFrequency="0.03" numOctaves="3" seed="15"/><feColorMatrix type="matrix" values="1 0 0 0 0  1 0 0 0 0  1 0 0 0 0  0 0 0 0 1"/></filter></defs><rect x="0.0" y="0.0" width="214.0" height="214.0" fill="#575454" opacity="1"/><rect x="0.0" y="0.0" width="214.0" height="1.0" fill="#6e6a6a" opacity="0.6"/><rect x="0.0" y="0.0" width="1.0" height="6.5" fill="#6a6666" opacity="0.5"/><rect x="24.0" y="0.0" width="1.0" height="6.5" fill="#6a6666" opacity="0.5"/><rect x="48.0" y="0.0" width="1.0" height="6.5" fill="#6a6666" opacity="0.5"/><rect x="72.0" y="0.0" width="1.0" height="6.5" fill="#6a6666" opacity="0.5"/><rect x="96.0" y="0.0" width="1.0" height="6.5" fill="#6a6666" opacity="0.5"/><rect x="120.0" y="0.0" width="1.0" height="6.5" fill="#6a6666" opacity="0.5"/><rect x="144.0" y="0.0" width="1.0" height="6.5" fill="#6a6666" opacity="0.5"/><rect x="168.0" y="0.0" width="1.0" height="6.5" fill="#6a6666" opacity="0.5"/><rect x="192.0" y="0.0" width="1.0" height="6.5" fill="#6a6666" opacity="0.5"/><rect x="0.0" y="6.5" width="214.0" height="1.0" fill="#6e6a6a" opacity="0.6"/><rect x="12.0" y="6.5" width="1.0" height="6.5" fill="#6a6666" opacity="0.5"/><rect x="36.0" y="6.5" width="1.0" height="6.5" fill="#6a6666" opacity="0.5"/><rect x="60.0" y="6.5" width="1.0" height="6.5" fill="#6a6666" opacity="0.5"/><rect x="84.0" y="6.5" width="1.0" height="6.5" fill="#6a6666" opacity="0.5"/><rect x="108.0" y="6.5" width="1.0" height="6.5" fill="#6a6666" opacity="0.5"/><rect x="132.0" y="6.5" width="1.0" height="6.5" fill="#6a6666" opacity="0.5"/><rect x="156.0" y="6.5" width="1.0" height="6.5" fill="#6a6666" opacity="0.5"/><rect x="180.0" y="6.5" width="1.0" height="6.5" fill="#6a6666" opacity="0.5"/><rect x="204.0" y="6.5" width="1.0" height="6.5" fill="#6a6666" opacity="0.5"/><rect x="0.0" y="13.0" width="214.0" height="1.0" fill="#6e6a6a" opacity="0.6"/><rect x="0.0" y="13.0" width="1.0" height="6.5" fill="#6a6666" opacity="0.5"/><rect x="24.0" y="13.0" width="1.0" height="6.5" fill="#6a6666" opacity="0.5"/><rect x="48.0" y="13.0" width="1.0" height="6.5" fill="#6a6666" opacity="0.5"/><rect x="72.0" y="13.0" width="1.0" height="6.5" fill="#6a6666" opacity="0.5"/><rect x="96.0" y="13.0" width="1.0" height="6.5" fill="#6a6666" opacity="0.5"/><rect x="120.0" y="13.0" width="1.0" height="6.5" fill="#6a6666" opacity="0.5"/><rect x="144.0" y="13.0" width="1.0" height="6.5" fill="#6a6666" opacity="0.5"/><rect x="168.0" y="13.0" width="1.0" height="6.5" fill="#6a6666" opacity="0.5"/><rect x="192.0" y="13.0" width="1.0" height="6.5" fill="#6a6666" opacity="0.5"/><rect x="0.0" y="19.5" width="214.0" height="1.0" fill="#6e6a6a" opacity="0.6"/><rect x="12.0" y="19.5" width="1.0" height="6.5" fill="#6a6666" opacity="0.5"/><rect x="36.0" y="19.5" width="1.0" height="6.5" fill="#6a6666" opacity="0.5"/><rect x="60.0" y="19.5" width="1.0" height="6.5" fill="#6a6666" opacity="0.5"/><rect x="84.0" y="19.5" width="1.0" height="6.5" fill="#6a6666" opacity="0.5"/><rect x="108.0" y="19.5" width="1.0" height="6.5" fill="#6a6666" opacity="0.5"/><rect x="132.0" y="19.5" width="1.0" height="6.5" fill="#6a6666" opacity="0.5"/><rect x="156.0" y="19.5" width="1.0" height="6.5" fill="#6a6666" opacity="0.5"/><rect x="180.0" y="19.5" width="1.0" height="6.5" fill="#6a6666" opacity="0.5"/><rect x="204.0" y="19.5" width="1.0" height="6.5" fill="#6a6666" opacity="0.5"/><rect x="0.0" y="26.0" width="214.0" height="1.0" fill="#6e6a6a" opacity="0.6"/><rect x="0.0" y="26.0" width="1.0" height="6.5" fill="#6a6666" opacity="0.5"/><rect x="24.0" y="26.0" width="1.0" height="6.5" fill="#6a6666" opacity="0.5"/><rect x="48.0" y="26.0" width="1.0" height="6.5" fill="#6a6666" opacity="0.5"/><rect x="72.0" y="26.0" width="1.0" height="6.5" fill="#6a6666" opacity="0.5"/><rect x="96.0" y="26.0" width="1.0" height="6.5" fill="#6a6666" opacity="0.5"/><rect x="120.0" y="26.0" width="1.0" height="6.5" fill="#6a6666" opacity="0.5"/><rect x="144.0" y="26.0" width="1.0" height="6.5" fill="#6a6666" opacity="0.5"/><rect x="168.0" y="26.0" width="1.0" height="6.5" fill="#6a6666" opacity="0.5"/><rect x="192.0" y="26.0" width="1.0" height="6.5" fill="#6a6666" opacity="0.5"/><rect x="0.0" y="32.5" width="214.0" height="1.0" fill="#6e6a6a" opacity="0.6"/><rect x="12.0" y="32.5" width="1.0" height="6.5" fill="#6a6666" opacity="0.5"/><rect x="36.0" y="32.5" width="1.0" height="6.5" fill="#6a6666" opacity="0.5"/><rect x="60.0" y="32.5" width="1.0" height="6.5" fill="#6a6666" opacity="0.5"/><rect x="84.0" y="32.5" width="1.0" height="6.5" fill="#6a6666" opacity="0.5"/><rect x="108.0" y="32.5" width="1.0" height="6.5" fill="#6a6666" opacity="0.5"/><rect x="132.0" y="32.5" width="1.0" height="6.5" fill="#6a6666" opacity="0.5"/><rect x="156.0" y="32.5" width="1.0" height="6.5" fill="#6a6666" opacity="0.5"/><rect x="180.0" y="32.5" width="1.0" height="6.5" fill="#6a6666" opacity="0.5"/><rect x="204.0" y="32.5" width="1.0" height="6.5" fill="#6a6666" opacity="0.5"/><rect x="0.0" y="39.0" width="214.0" height="1.0" fill="#6e6a6a" opacity="0.6"/><rect x="0.0" y="39.0" width="1.0" height="6.5" fill="#6a6666" opacity="0.5"/><rect x="24.0" y="39.0" width="1.0" height="6.5" fill="#6a6666" opacity="0.5"/><rect x="48.0" y="39.0" width="1.0" height="6.5" fill="#6a6666" opacity="0.5"/><rect x="72.0" y="39.0" width="1.0" height="6.5" fill="#6a6666" opacity="0.5"/><rect x="96.0" y="39.0" width="1.0" height="6.5" fill="#6a6666" opacity="0.5"/><rect x="120.0" y="39.0" width="1.0" height="6.5" fill="#6a6666" opacity="0.5"/><rect x="144.0" y="39.0" width="1.0" height="6.5" fill="#6a6666" opacity="0.5"/><rect x="168.0" y="39.0" width="1.0" height="6.5" fill="#6a6666" opacity="0.5"/><rect x="192.0" y="39.0" width="1.0" height="6.5" fill="#6a6666" opacity="0.5"/><rect x="0.0" y="45.5" width="214.0" height="1.0" fill="#6e6a6a" opacity="0.6"/><rect x="12.0" y="45.5" width="1.0" height="6.5" fill="#6a6666" opacity="0.5"/><rect x="36.0" y="45.5" width="1.0" height="6.5" fill="#6a6666" opacity="0.5"/><rect x="60.0" y="45.5" width="1.0" height="6.5" fill="#6a6666" opacity="0.5"/><rect x="84.0" y="45.5" width="1.0" height="6.5" fill="#6a6666" opacity="0.5"/><rect x="108.0" y="45.5" width="1.0" height="6.5" fill="#6a6666" opacity="0.5"/><rect x="132.0" y="45.5" width="1.0" height="6.5" fill="#6a6666" opacity="0.5"/><rect x="156.0" y="45.5" width="1.0" height="6.5" fill="#6a6666" opacity="0.5"/><rect x="180.0" y="45.5" width="1.0" height="6.5" fill="#6a6666" opacity="0.5"/><rect x="204.0" y="45.5" width="1.0" height="6.5" fill="#6a6666" opacity="0.5"/><rect x="0.0" y="52.0" width="214.0" height="1.0" fill="#6e6a6a" opacity="0.6"/><rect x="0.0" y="52.0" width="1.0" height="6.5" fill="#6a6666" opacity="0.5"/><rect x="24.0" y="52.0" width="1.0" height="6.5" fill="#6a6666" opacity="0.5"/><rect x="48.0" y="52.0" width="1.0" height="6.5" fill="#6a6666" opacity="0.5"/><rect x="72.0" y="52.0" width="1.0" height="6.5" fill="#6a6666" opacity="0.5"/><rect x="96.0" y="52.0" width="1.0" height="6.5" fill="#6a6666" opacity="0.5"/><rect x="120.0" y="52.0" width="1.0" height="6.5" fill="#6a6666" opacity="0.5"/><rect x="144.0" y="52.0" width="1.0" height="6.5" fill="#6a6666" opacity="0.5"/><rect x="168.0" y="52.0" width="1.0" height="6.5" fill="#6a6666" opacity="0.5"/><rect x="192.0" y="52.0" width="1.0" height="6.5" fill="#6a6666" opacity="0.5"/><rect x="0.0" y="58.5" width="214.0" height="1.0" fill="#6e6a6a" opacity="0.6"/><rect x="12.0" y="58.5" width="1.0" height="6.5" fill="#6a6666" opacity="0.5"/><rect x="36.0" y="58.5" width="1.0" height="6.5" fill="#6a6666" opacity="0.5"/><rect x="60.0" y="58.5" width="1.0" height="6.5" fill="#6a6666" opacity="0.5"/><rect x="84.0" y="58.5" width="1.0" height="6.5" fill="#6a6666" opacity="0.5"/><rect x="108.0" y="58.5" width="1.0" height="6.5" fill="#6a6666" opacity="0.5"/><rect x="132.0" y="58.5" width="1.0" height="6.5" fill="#6a6666" opacity="0.5"/><rect x="156.0" y="58.5" width="1.0" height="6.5" fill="#6a6666" opacity="0.5"/><rect x="180.0" y="58.5" width="1.0" height="6.5" fill="#6a6666" opacity="0.5"/><rect x="204.0" y="58.5" width="1.0" height="6.5" fill="#6a6666" opacity="0.5"/><rect x="0.0" y="65.0" width="214.0" height="1.0" fill="#6e6a6a" opacity="0.6"/><rect x="0.0" y="65.0" width="1.0" height="6.5" fill="#6a6666" opacity="0.5"/><rect x="24.0" y="65.0" width="1.0" height="6.5" fill="#6a6666" opacity="0.5"/><rect x="48.0" y="65.0" width="1.0" height="6.5" fill="#6a6666" opacity="0.5"/><rect x="72.0" y="65.0" width="1.0" height="6.5" fill="#6a6666" opacity="0.5"/><rect x="96.0" y="65.0" width="1.0" height="6.5" fill="#6a6666" opacity="0.5"/><rect x="120.0" y="65.0" width="1.0" height="6.5" fill="#6a6666" opacity="0.5"/><rect x="144.0" y="65.0" width="1.0" height="6.5" fill="#6a6666" opacity="0.5"/><rect x="168.0" y="65.0" width="1.0" height="6.5" fill="#6a6666" opacity="0.5"/><rect x="192.0" y="65.0" width="1.0" height="6.5" fill="#6a6666" opacity="0.5"/><rect x="0.0" y="71.5" width="214.0" height="1.0" fill="#6e6a6a" opacity="0.6"/><rect x="12.0" y="71.5" width="1.0" height="6.5" fill="#6a6666" opacity="0.5"/><rect x="36.0" y="71.5" width="1.0" height="6.5" fill="#6a6666" opacity="0.5"/><rect x="60.0" y="71.5" width="1.0" height="6.5" fill="#6a6666" opacity="0.5"/><rect x="84.0" y="71.5" width="1.0" height="6.5" fill="#6a6666" opacity="0.5"/><rect x="108.0" y="71.5" width="1.0" height="6.5" fill="#6a6666" opacity="0.5"/><rect x="132.0" y="71.5" width="1.0" height="6.5" fill="#6a6666" opacity="0.5"/><rect x="156.0" y="71.5" width="1.0" height="6.5" fill="#6a6666" opacity="0.5"/><rect x="180.0" y="71.5" width="1.0" height="6.5" fill="#6a6666" opacity="0.5"/><rect x="204.0" y="71.5" width="1.0" height="6.5" fill="#6a6666" opacity="0.5"/><rect x="0.0" y="78.0" width="214.0" height="1.0" fill="#6e6a6a" opacity="0.6"/><rect x="0.0" y="78.0" width="1.0" height="6.5" fill="#6a6666" opacity="0.5"/><rect x="24.0" y="78.0" width="1.0" height="6.5" fill="#6a6666" opacity="0.5"/><rect x="48.0" y="78.0" width="1.0" height="6.5" fill="#6a6666" opacity="0.5"/><rect x="72.0" y="78.0" width="1.0" height="6.5" fill="#6a6666" opacity="0.5"/><rect x="96.0" y="78.0" width="1.0" height="6.5" fill="#6a6666" opacity="0.5"/><rect x="120.0" y="78.0" width="1.0" height="6.5" fill="#6a6666" opacity="0.5"/><rect x="144.0" y="78.0" width="1.0" height="6.5" fill="#6a6666" opacity="0.5"/><rect x="168.0" y="78.0" width="1.0" height="6.5" fill="#6a6666" opacity="0.5"/><rect x="192.0" y="78.0" width="1.0" height="6.5" fill="#6a6666" opacity="0.5"/><rect x="0.0" y="84.5" width="214.0" height="1.0" fill="#6e6a6a" opacity="0.6"/><rect x="12.0" y="84.5" width="1.0" height="6.5" fill="#6a6666" opacity="0.5"/><rect x="36.0" y="84.5" width="1.0" height="6.5" fill="#6a6666" opacity="0.5"/><rect x="60.0" y="84.5" width="1.0" height="6.5" fill="#6a6666" opacity="0.5"/><rect x="84.0" y="84.5" width="1.0" height="6.5" fill="#6a6666" opacity="0.5"/><rect x="108.0" y="84.5" width="1.0" height="6.5" fill="#6a6666" opacity="0.5"/><rect x="132.0" y="84.5" width="1.0" height="6.5" fill="#6a6666" opacity="0.5"/><rect x="156.0" y="84.5" width="1.0" height="6.5" fill="#6a6666" opacity="0.5"/><rect x="180.0" y="84.5" width="1.0" height="6.5" fill="#6a6666" opacity="0.5"/><rect x="204.0" y="84.5" width="1.0" height="6.5" fill="#6a6666" opacity="0.5"/><rect x="0.0" y="91.0" width="214.0" height="1.0" fill="#6e6a6a" opacity="0.6"/><rect x="0.0" y="91.0" width="1.0" height="6.5" fill="#6a6666" opacity="0.5"/><rect x="24.0" y="91.0" width="1.0" height="6.5" fill="#6a6666" opacity="0.5"/><rect x="48.0" y="91.0" width="1.0" height="6.5" fill="#6a6666" opacity="0.5"/><rect x="72.0" y="91.0" width="1.0" height="6.5" fill="#6a6666" opacity="0.5"/><rect x="96.0" y="91.0" width="1.0" height="6.5" fill="#6a6666" opacity="0.5"/><rect x="120.0" y="91.0" width="1.0" height="6.5" fill="#6a6666" opacity="0.5"/><rect x="144.0" y="91.0" width="1.0" height="6.5" fill="#6a6666" opacity="0.5"/><rect x="168.0" y="91.0" width="1.0" height="6.5" fill="#6a6666" opacity="0.5"/><rect x="192.0" y="91.0" width="1.0" height="6.5" fill="#6a6666" opacity="0.5"/><rect x="0.0" y="97.5" width="214.0" height="1.0" fill="#6e6a6a" opacity="0.6"/><rect x="12.0" y="97.5" width="1.0" height="6.5" fill="#6a6666" opacity="0.5"/><rect x="36.0" y="97.5" width="1.0" height="6.5" fill="#6a6666" opacity="0.5"/><rect x="60.0" y="97.5" width="1.0" height="6.5" fill="#6a6666" opacity="0.5"/><rect x="84.0" y="97.5" width="1.0" height="6.5" fill="#6a6666" opacity="0.5"/><rect x="108.0" y="97.5" width="1.0" height="6.5" fill="#6a6666" opacity="0.5"/><rect x="132.0" y="97.5" width="1.0" height="6.5" fill="#6a6666" opacity="0.5"/><rect x="156.0" y="97.5" width="1.0" height="6.5" fill="#6a6666" opacity="0.5"/><rect x="180.0" y="97.5" width="1.0" height="6.5" fill="#6a6666" opacity="0.5"/><rect x="204.0" y="97.5" width="1.0" height="6.5" fill="#6a6666" opacity="0.5"/><rect x="0.0" y="104.0" width="214.0" height="1.0" fill="#6e6a6a" opacity="0.6"/><rect x="0.0" y="104.0" width="1.0" height="6.5" fill="#6a6666" opacity="0.5"/><rect x="24.0" y="104.0" width="1.0" height="6.5" fill="#6a6666" opacity="0.5"/><rect x="48.0" y="104.0" width="1.0" height="6.5" fill="#6a6666" opacity="0.5"/><rect x="72.0" y="104.0" width="1.0" height="6.5" fill="#6a6666" opacity="0.5"/><rect x="96.0" y="104.0" width="1.0" height="6.5" fill="#6a6666" opacity="0.5"/><rect x="120.0" y="104.0" width="1.0" height="6.5" fill="#6a6666" opacity="0.5"/><rect x="144.0" y="104.0" width="1.0" height="6.5" fill="#6a6666" opacity="0.5"/><rect x="168.0" y="104.0" width="1.0" height="6.5" fill="#6a6666" opacity="0.5"/><rect x="192.0" y="104.0" width="1.0" height="6.5" fill="#6a6666" opacity="0.5"/><rect x="0.0" y="110.5" width="214.0" height="1.0" fill="#6e6a6a" opacity="0.6"/><rect x="12.0" y="110.5" width="1.0" height="6.5" fill="#6a6666" opacity="0.5"/><rect x="36.0" y="110.5" width="1.0" height="6.5" fill="#6a6666" opacity="0.5"/><rect x="60.0" y="110.5" width="1.0" height="6.5" fill="#6a6666" opacity="0.5"/><rect x="84.0" y="110.5" width="1.0" height="6.5" fill="#6a6666" opacity="0.5"/><rect x="108.0" y="110.5" width="1.0" height="6.5" fill="#6a6666" opacity="0.5"/><rect x="132.0" y="110.5" width="1.0" height="6.5" fill="#6a6666" opacity="0.5"/><rect x="156.0" y="110.5" width="1.0" height="6.5" fill="#6a6666" opacity="0.5"/><rect x="180.0" y="110.5" width="1.0" height="6.5" fill="#6a6666" opacity="0.5"/><rect x="204.0" y="110.5" width="1.0" height="6.5" fill="#6a6666" opacity="0.5"/><rect x="0.0" y="117.0" width="214.0" height="1.0" fill="#6e6a6a" opacity="0.6"/><rect x="0.0" y="117.0" width="1.0" height="6.5" fill="#6a6666" opacity="0.5"/><rect x="24.0" y="117.0" width="1.0" height="6.5" fill="#6a6666" opacity="0.5"/><rect x="48.0" y="117.0" width="1.0" height="6.5" fill="#6a6666" opacity="0.5"/><rect x="72.0" y="117.0" width="1.0" height="6.5" fill="#6a6666" opacity="0.5"/><rect x="96.0" y="117.0" width="1.0" height="6.5" fill="#6a6666" opacity="0.5"/><rect x="120.0" y="117.0" width="1.0" height="6.5" fill="#6a6666" opacity="0.5"/><rect x="144.0" y="117.0" width="1.0" height="6.5" fill="#6a6666" opacity="0.5"/><rect x="168.0" y="117.0" width="1.0" height="6.5" fill="#6a6666" opacity="0.5"/><rect x="192.0" y="117.0" width="1.0" height="6.5" fill="#6a6666" opacity="0.5"/><rect x="0.0" y="123.5" width="214.0" height="1.0" fill="#6e6a6a" opacity="0.6"/><rect x="12.0" y="123.5" width="1.0" height="6.5" fill="#6a6666" opacity="0.5"/><rect x="36.0" y="123.5" width="1.0" height="6.5" fill="#6a6666" opacity="0.5"/><rect x="60.0" y="123.5" width="1.0" height="6.5" fill="#6a6666" opacity="0.5"/><rect x="84.0" y="123.5" width="1.0" height="6.5" fill="#6a6666" opacity="0.5"/><rect x="108.0" y="123.5" width="1.0" height="6.5" fill="#6a6666" opacity="0.5"/><rect x="132.0" y="123.5" width="1.0" height="6.5" fill="#6a6666" opacity="0.5"/><rect x="156.0" y="123.5" width="1.0" height="6.5" fill="#6a6666" opacity="0.5"/><rect x="180.0" y="123.5" width="1.0" height="6.5" fill="#6a6666" opacity="0.5"/><rect x="204.0" y="123.5" width="1.0" height="6.5" fill="#6a6666" opacity="0.5"/><rect x="0.0" y="130.0" width="214.0" height="1.0" fill="#6e6a6a" opacity="0.6"/><rect x="0.0" y="130.0" width="1.0" height="6.5" fill="#6a6666" opacity="0.5"/><rect x="24.0" y="130.0" width="1.0" height="6.5" fill="#6a6666" opacity="0.5"/><rect x="48.0" y="130.0" width="1.0" height="6.5" fill="#6a6666" opacity="0.5"/><rect x="72.0" y="130.0" width="1.0" height="6.5" fill="#6a6666" opacity="0.5"/><rect x="96.0" y="130.0" width="1.0" height="6.5" fill="#6a6666" opacity="0.5"/><rect x="120.0" y="130.0" width="1.0" height="6.5" fill="#6a6666" opacity="0.5"/><rect x="144.0" y="130.0" width="1.0" height="6.5" fill="#6a6666" opacity="0.5"/><rect x="168.0" y="130.0" width="1.0" height="6.5" fill="#6a6666" opacity="0.5"/><rect x="192.0" y="130.0" width="1.0" height="6.5" fill="#6a6666" opacity="0.5"/><rect x="0.0" y="136.5" width="214.0" height="1.0" fill="#6e6a6a" opacity="0.6"/><rect x="12.0" y="136.5" width="1.0" height="6.5" fill="#6a6666" opacity="0.5"/><rect x="36.0" y="136.5" width="1.0" height="6.5" fill="#6a6666" opacity="0.5"/><rect x="60.0" y="136.5" width="1.0" height="6.5" fill="#6a6666" opacity="0.5"/><rect x="84.0" y="136.5" width="1.0" height="6.5" fill="#6a6666" opacity="0.5"/><rect x="108.0" y="136.5" width="1.0" height="6.5" fill="#6a6666" opacity="0.5"/><rect x="132.0" y="136.5" width="1.0" height="6.5" fill="#6a6666" opacity="0.5"/><rect x="156.0" y="136.5" width="1.0" height="6.5" fill="#6a6666" opacity="0.5"/><rect x="180.0" y="136.5" width="1.0" height="6.5" fill="#6a6666" opacity="0.5"/><rect x="204.0" y="136.5" width="1.0" height="6.5" fill="#6a6666" opacity="0.5"/><rect x="0.0" y="143.0" width="214.0" height="1.0" fill="#6e6a6a" opacity="0.6"/><rect x="0.0" y="143.0" width="1.0" height="6.5" fill="#6a6666" opacity="0.5"/><rect x="24.0" y="143.0" width="1.0" height="6.5" fill="#6a6666" opacity="0.5"/><rect x="48.0" y="143.0" width="1.0" height="6.5" fill="#6a6666" opacity="0.5"/><rect x="72.0" y="143.0" width="1.0" height="6.5" fill="#6a6666" opacity="0.5"/><rect x="96.0" y="143.0" width="1.0" height="6.5" fill="#6a6666" opacity="0.5"/><rect x="120.0" y="143.0" width="1.0" height="6.5" fill="#6a6666" opacity="0.5"/><rect x="144.0" y="143.0" width="1.0" height="6.5" fill="#6a6666" opacity="0.5"/><rect x="168.0" y="143.0" width="1.0" height="6.5" fill="#6a6666" opacity="0.5"/><rect x="192.0" y="143.0" width="1.0" height="6.5" fill="#6a6666" opacity="0.5"/><rect x="0.0" y="149.5" width="214.0" height="1.0" fill="#6e6a6a" opacity="0.6"/><rect x="12.0" y="149.5" width="1.0" height="6.5" fill="#6a6666" opacity="0.5"/><rect x="36.0" y="149.5" width="1.0" height="6.5" fill="#6a6666" opacity="0.5"/><rect x="60.0" y="149.5" width="1.0" height="6.5" fill="#6a6666" opacity="0.5"/><rect x="84.0" y="149.5" width="1.0" height="6.5" fill="#6a6666" opacity="0.5"/><rect x="108.0" y="149.5" width="1.0" height="6.5" fill="#6a6666" opacity="0.5"/><rect x="132.0" y="149.5" width="1.0" height="6.5" fill="#6a6666" opacity="0.5"/><rect x="156.0" y="149.5" width="1.0" height="6.5" fill="#6a6666" opacity="0.5"/><rect x="180.0" y="149.5" width="1.0" height="6.5" fill="#6a6666" opacity="0.5"/><rect x="204.0" y="149.5" width="1.0" height="6.5" fill="#6a6666" opacity="0.5"/><rect x="0.0" y="156.0" width="214.0" height="1.0" fill="#6e6a6a" opacity="0.6"/><rect x="0.0" y="156.0" width="1.0" height="6.5" fill="#6a6666" opacity="0.5"/><rect x="24.0" y="156.0" width="1.0" height="6.5" fill="#6a6666" opacity="0.5"/><rect x="48.0" y="156.0" width="1.0" height="6.5" fill="#6a6666" opacity="0.5"/><rect x="72.0" y="156.0" width="1.0" height="6.5" fill="#6a6666" opacity="0.5"/><rect x="96.0" y="156.0" width="1.0" height="6.5" fill="#6a6666" opacity="0.5"/><rect x="120.0" y="156.0" width="1.0" height="6.5" fill="#6a6666" opacity="0.5"/><rect x="144.0" y="156.0" width="1.0" height="6.5" fill="#6a6666" opacity="0.5"/><rect x="168.0" y="156.0" width="1.0" height="6.5" fill="#6a6666" opacity="0.5"/><rect x="192.0" y="156.0" width="1.0" height="6.5" fill="#6a6666" opacity="0.5"/><rect x="0.0" y="162.5" width="214.0" height="1.0" fill="#6e6a6a" opacity="0.6"/><rect x="12.0" y="162.5" width="1.0" height="6.5" fill="#6a6666" opacity="0.5"/><rect x="36.0" y="162.5" width="1.0" height="6.5" fill="#6a6666" opacity="0.5"/><rect x="60.0" y="162.5" width="1.0" height="6.5" fill="#6a6666" opacity="0.5"/><rect x="84.0" y="162.5" width="1.0" height="6.5" fill="#6a6666" opacity="0.5"/><rect x="108.0" y="162.5" width="1.0" height="6.5" fill="#6a6666" opacity="0.5"/><rect x="132.0" y="162.5" width="1.0" height="6.5" fill="#6a6666" opacity="0.5"/><rect x="156.0" y="162.5" width="1.0" height="6.5" fill="#6a6666" opacity="0.5"/><rect x="180.0" y="162.5" width="1.0" height="6.5" fill="#6a6666" opacity="0.5"/><rect x="204.0" y="162.5" width="1.0" height="6.5" fill="#6a6666" opacity="0.5"/><rect x="0.0" y="169.0" width="214.0" height="1.0" fill="#6e6a6a" opacity="0.6"/><rect x="0.0" y="169.0" width="1.0" height="6.5" fill="#6a6666" opacity="0.5"/><rect x="24.0" y="169.0" width="1.0" height="6.5" fill="#6a6666" opacity="0.5"/><rect x="48.0" y="169.0" width="1.0" height="6.5" fill="#6a6666" opacity="0.5"/><rect x="72.0" y="169.0" width="1.0" height="6.5" fill="#6a6666" opacity="0.5"/><rect x="96.0" y="169.0" width="1.0" height="6.5" fill="#6a6666" opacity="0.5"/><rect x="120.0" y="169.0" width="1.0" height="6.5" fill="#6a6666" opacity="0.5"/><rect x="144.0" y="169.0" width="1.0" height="6.5" fill="#6a6666" opacity="0.5"/><rect x="168.0" y="169.0" width="1.0" height="6.5" fill="#6a6666" opacity="0.5"/><rect x="192.0" y="169.0" width="1.0" height="6.5" fill="#6a6666" opacity="0.5"/><rect x="0.0" y="175.5" width="214.0" height="1.0" fill="#6e6a6a" opacity="0.6"/><rect x="12.0" y="175.5" width="1.0" height="6.5" fill="#6a6666" opacity="0.5"/><rect x="36.0" y="175.5" width="1.0" height="6.5" fill="#6a6666" opacity="0.5"/><rect x="60.0" y="175.5" width="1.0" height="6.5" fill="#6a6666" opacity="0.5"/><rect x="84.0" y="175.5" width="1.0" height="6.5" fill="#6a6666" opacity="0.5"/><rect x="108.0" y="175.5" width="1.0" height="6.5" fill="#6a6666" opacity="0.5"/><rect x="132.0" y="175.5" width="1.0" height="6.5" fill="#6a6666" opacity="0.5"/><rect x="156.0" y="175.5" width="1.0" height="6.5" fill="#6a6666" opacity="0.5"/><rect x="180.0" y="175.5" width="1.0" height="6.5" fill="#6a6666" opacity="0.5"/><rect x="204.0" y="175.5" width="1.0" height="6.5" fill="#6a6666" opacity="0.5"/><rect x="0.0" y="182.0" width="214.0" height="1.0" fill="#6e6a6a" opacity="0.6"/><rect x="0.0" y="182.0" width="1.0" height="6.5" fill="#6a6666" opacity="0.5"/><rect x="24.0" y="182.0" width="1.0" height="6.5" fill="#6a6666" opacity="0.5"/><rect x="48.0" y="182.0" width="1.0" height="6.5" fill="#6a6666" opacity="0.5"/><rect x="72.0" y="182.0" width="1.0" height="6.5" fill="#6a6666" opacity="0.5"/><rect x="96.0" y="182.0" width="1.0" height="6.5" fill="#6a6666" opacity="0.5"/><rect x="120.0" y="182.0" width="1.0" height="6.5" fill="#6a6666" opacity="0.5"/><rect x="144.0" y="182.0" width="1.0" height="6.5" fill="#6a6666" opacity="0.5"/><rect x="168.0" y="182.0" width="1.0" height="6.5" fill="#6a6666" opacity="0.5"/><rect x="192.0" y="182.0" width="1.0" height="6.5" fill="#6a6666" opacity="0.5"/><rect x="0.0" y="188.5" width="214.0" height="1.0" fill="#6e6a6a" opacity="0.6"/><rect x="12.0" y="188.5" width="1.0" height="6.5" fill="#6a6666" opacity="0.5"/><rect x="36.0" y="188.5" width="1.0" height="6.5" fill="#6a6666" opacity="0.5"/><rect x="60.0" y="188.5" width="1.0" height="6.5" fill="#6a6666" opacity="0.5"/><rect x="84.0" y="188.5" width="1.0" height="6.5" fill="#6a6666" opacity="0.5"/><rect x="108.0" y="188.5" width="1.0" height="6.5" fill="#6a6666" opacity="0.5"/><rect x="132.0" y="188.5" width="1.0" height="6.5" fill="#6a6666" opacity="0.5"/><rect x="156.0" y="188.5" width="1.0" height="6.5" fill="#6a6666" opacity="0.5"/><rect x="180.0" y="188.5" width="1.0" height="6.5" fill="#6a6666" opacity="0.5"/><rect x="204.0" y="188.5" width="1.0" height="6.5" fill="#6a6666" opacity="0.5"/><rect x="0.0" y="195.0" width="214.0" height="1.0" fill="#6e6a6a" opacity="0.6"/><rect x="0.0" y="195.0" width="1.0" height="6.5" fill="#6a6666" opacity="0.5"/><rect x="24.0" y="195.0" width="1.0" height="6.5" fill="#6a6666" opacity="0.5"/><rect x="48.0" y="195.0" width="1.0" height="6.5" fill="#6a6666" opacity="0.5"/><rect x="72.0" y="195.0" width="1.0" height="6.5" fill="#6a6666" opacity="0.5"/><rect x="96.0" y="195.0" width="1.0" height="6.5" fill="#6a6666" opacity="0.5"/><rect x="120.0" y="195.0" width="1.0" height="6.5" fill="#6a6666" opacity="0.5"/><rect x="144.0" y="195.0" width="1.0" height="6.5" fill="#6a6666" opacity="0.5"/><rect x="168.0" y="195.0" width="1.0" height="6.5" fill="#6a6666" opacity="0.5"/><rect x="192.0" y="195.0" width="1.0" height="6.5" fill="#6a6666" opacity="0.5"/><rect x="0.0" y="201.5" width="214.0" height="1.0" fill="#6e6a6a" opacity="0.6"/><rect x="12.0" y="201.5" width="1.0" height="6.5" fill="#6a6666" opacity="0.5"/><rect x="36.0" y="201.5" width="1.0" height="6.5" fill="#6a6666" opacity="0.5"/><rect x="60.0" y="201.5" width="1.0" height="6.5" fill="#6a6666" opacity="0.5"/><rect x="84.0" y="201.5" width="1.0" height="6.5" fill="#6a6666" opacity="0.5"/><rect x="108.0" y="201.5" width="1.0" height="6.5" fill="#6a6666" opacity="0.5"/><rect x="132.0" y="201.5" width="1.0" height="6.5" fill="#6a6666" opacity="0.5"/><rect x="156.0" y="201.5" width="1.0" height="6.5" fill="#6a6666" opacity="0.5"/><rect x="180.0" y="201.5" width="1.0" height="6.5" fill="#6a6666" opacity="0.5"/><rect x="204.0" y="201.5" width="1.0" height="6.5" fill="#6a6666" opacity="0.5"/><rect x="0.0" y="208.0" width="214.0" height="1.0" fill="#6e6a6a" opacity="0.6"/><rect x="0.0" y="208.0" width="1.0" height="6.5" fill="#6a6666" opacity="0.5"/><rect x="24.0" y="208.0" width="1.0" height="6.5" fill="#6a6666" opacity="0.5"/><rect x="48.0" y="208.0" width="1.0" height="6.5" fill="#6a6666" opacity="0.5"/><rect x="72.0" y="208.0" width="1.0" height="6.5" fill="#6a6666" opacity="0.5"/><rect x="96.0" y="208.0" width="1.0" height="6.5" fill="#6a6666" opacity="0.5"/><rect x="120.0" y="208.0" width="1.0" height="6.5" fill="#6a6666" opacity="0.5"/><rect x="144.0" y="208.0" width="1.0" height="6.5" fill="#6a6666" opacity="0.5"/><rect x="168.0" y="208.0" width="1.0" height="6.5" fill="#6a6666" opacity="0.5"/><rect x="192.0" y="208.0" width="1.0" height="6.5" fill="#6a6666" opacity="0.5"/><rect x="0.0" y="214.5" width="214.0" height="1.0" fill="#6e6a6a" opacity="0.6"/><rect x="12.0" y="214.5" width="1.0" height="6.5" fill="#6a6666" opacity="0.5"/><rect x="36.0" y="214.5" width="1.0" height="6.5" fill="#6a6666" opacity="0.5"/><rect x="60.0" y="214.5" width="1.0" height="6.5" fill="#6a6666" opacity="0.5"/><rect x="84.0" y="214.5" width="1.0" height="6.5" fill="#6a6666" opacity="0.5"/><rect x="108.0" y="214.5" width="1.0" height="6.5" fill="#6a6666" opacity="0.5"/><rect x="132.0" y="214.5" width="1.0" height="6.5" fill="#6a6666" opacity="0.5"/><rect x="156.0" y="214.5" width="1.0" height="6.5" fill="#6a6666" opacity="0.5"/><rect x="180.0" y="214.5" width="1.0" height="6.5" fill="#6a6666" opacity="0.5"/><rect x="204.0" y="214.5" width="1.0" height="6.5" fill="#6a6666" opacity="0.5"/><rect width="214" height="214" filter="url(#n14_0)" opacity="0.12" style="mix-blend-mode:overlay"/></svg></div><div class="card" style="left:1476.7px;top:911.7px"></div><div class="img" style="left:1500.4px;top:918.4px"><svg width="214" height="214" style="display:block"><defs><filter id="n15_0" x="0" y="0" width="100%" height="100%" color-interpolation-filters="sRGB"><feTurbulence type="fractalNoise" baseFrequency="0.1" numOctaves="2" seed="16"/><feColorMatrix type="matrix" values="1 0 0 0 0  1 0 0 0 0  1 0 0 0 0  0 0 0 0 1"/></filter></defs><rect x="0.0" y="0.0" width="214.0" height="214.0" fill="#bab54c" opacity="1"/><rect x="0.5" y="0.0" width="1.5" height="214.0" fill="#505018" opacity="0.85"/><rect x="21.8" y="0.0" width="1.5" height="214.0" fill="#505018" opacity="0.85"/><rect x="43.1" y="0.0" width="1.5" height="214.0" fill="#505018" opacity="0.85"/><rect x="64.4" y="0.0" width="1.5" height="214.0" fill="#505018" opacity="0.85"/><rect x="85.7" y="0.0" width="1.5" height="214.0" fill="#505018" opacity="0.85"/><rect x="107.0" y="0.0" width="1.5" height="214.0" fill="#505018" opacity="0.85"/><rect x="128.3" y="0.0" width="1.5" height="214.0" fill="#505018" opacity="0.85"/><rect x="149.6" y="0.0" width="1.5" height="214.0" fill="#505018" opacity="0.85"/><rect x="170.9" y="0.0" width="1.5" height="214.0" fill="#505018" opacity="0.85"/><rect x="192.2" y="0.0" width="1.5" height="214.0" fill="#505018" opacity="0.85"/><rect x="213.5" y="0.0" width="1.5" height="214.0" fill="#505018" opacity="0.85"/><rect x="0.0" y="0.5" width="214.0" height="1.5" fill="#505018" opacity="0.85"/><rect x="0.0" y="43.3" width="214.0" height="1.5" fill="#505018" opacity="0.85"/><rect x="0.0" y="86.1" width="214.0" height="1.5" fill="#505018" opacity="0.85"/><rect x="0.0" y="128.9" width="214.0" height="1.5" fill="#505018" opacity="0.85"/><rect x="0.0" y="171.7" width="214.0" height="1.5" fill="#505018" opacity="0.85"/><rect x="0.0" y="214.5" width="214.0" height="1.5" fill="#505018" opacity="0.85"/><rect width="214" height="214" filter="url(#n15_0)" opacity="0.15" style="mix-blend-mode:overlay"/></svg></div>
<svg class="abs" style="left:0;top:0" width="2000" height="1020">
<defs><filter id="ng" x="-20%" y="-60%" width="140%" height="220%"><feGaussianBlur stdDeviation="11"/></filter></defs>
<g filter="url(#ng)" opacity="0.75"><text x="33.5" y="190.2" font-size="33.5" fill="#a8925e" stroke="#a8925e" stroke-width="2.6" stroke-linejoin="miter" font-weight="bold" textLength="72.5" lengthAdjust="spacingAndGlyphs">Blogs</text><text x="124.8" y="190.2" font-size="33.5" fill="#a8925e" stroke="#a8925e" stroke-width="2.6" stroke-linejoin="miter" font-weight="bold" textLength="37.8" lengthAdjust="spacingAndGlyphs">Art</text><text x="182" y="190.2" font-size="33.5" fill="#a8925e" stroke="#a8925e" stroke-width="2.6" stroke-linejoin="miter" font-weight="bold" textLength="146.3" lengthAdjust="spacingAndGlyphs">Uebergame</text><text x="348.9" y="190.2" font-size="33.5" fill="#a8925e" stroke="#a8925e" stroke-width="2.6" stroke-linejoin="miter" font-weight="bold" textLength="201.6" lengthAdjust="spacingAndGlyphs">Communication</text><text x="569.8" y="190.2" font-size="33.5" fill="#a8925e" stroke="#a8925e" stroke-width="2.6" stroke-linejoin="miter" font-weight="bold" textLength="103.5" lengthAdjust="spacingAndGlyphs">Wisdom</text><text x="694" y="190.2" font-size="33.5" fill="#a8925e" stroke="#a8925e" stroke-width="2.6" stroke-linejoin="miter" font-weight="bold" textLength="113.6" lengthAdjust="spacingAndGlyphs">Tutorials</text><text x="827.9" y="190.2" font-size="33.5" fill="#a8925e" stroke="#a8925e" stroke-width="2.6" stroke-linejoin="miter" font-weight="bold" textLength="64.6" lengthAdjust="spacingAndGlyphs">Links</text><text x="912.3" y="190.2" font-size="33.5" fill="#a8925e" stroke="#a8925e" stroke-width="2.6" stroke-linejoin="miter" font-weight="bold" textLength="73.7" lengthAdjust="spacingAndGlyphs">About</text></g>
<text x="33.5" y="190.2" font-size="33.5" fill="#a8925e" stroke="#a8925e" stroke-width="2.6" stroke-linejoin="miter" font-weight="bold" textLength="72.5" lengthAdjust="spacingAndGlyphs">Blogs</text><text x="124.8" y="190.2" font-size="33.5" fill="#a8925e" stroke="#a8925e" stroke-width="2.6" stroke-linejoin="miter" font-weight="bold" textLength="37.8" lengthAdjust="spacingAndGlyphs">Art</text><text x="182" y="190.2" font-size="33.5" fill="#a8925e" stroke="#a8925e" stroke-width="2.6" stroke-linejoin="miter" font-weight="bold" textLength="146.3" lengthAdjust="spacingAndGlyphs">Uebergame</text><text x="348.9" y="190.2" font-size="33.5" fill="#a8925e" stroke="#a8925e" stroke-width="2.6" stroke-linejoin="miter" font-weight="bold" textLength="201.6" lengthAdjust="spacingAndGlyphs">Communication</text><text x="569.8" y="190.2" font-size="33.5" fill="#a8925e" stroke="#a8925e" stroke-width="2.6" stroke-linejoin="miter" font-weight="bold" textLength="103.5" lengthAdjust="spacingAndGlyphs">Wisdom</text><text x="694" y="190.2" font-size="33.5" fill="#a8925e" stroke="#a8925e" stroke-width="2.6" stroke-linejoin="miter" font-weight="bold" textLength="113.6" lengthAdjust="spacingAndGlyphs">Tutorials</text><text x="827.9" y="190.2" font-size="33.5" fill="#a8925e" stroke="#a8925e" stroke-width="2.6" stroke-linejoin="miter" font-weight="bold" textLength="64.6" lengthAdjust="spacingAndGlyphs">Links</text><text x="912.3" y="190.2" font-size="33.5" fill="#a8925e" stroke="#a8925e" stroke-width="2.6" stroke-linejoin="miter" font-weight="bold" textLength="73.7" lengthAdjust="spacingAndGlyphs">About</text>
<polygon points="51.8,283.1 61.8,283.1 56.8,288.1" fill="#000"/><polygon points="96.6,316.33000000000004 102.6,321.33000000000004 96.6,326.33000000000004" fill="#000"/><polygon points="96.6,350.06 102.6,355.06 96.6,360.06" fill="#000"/><polygon points="94.6,384.29 104.6,384.29 99.6,389.29" fill="#000"/><polygon points="138.5,417.52 144.5,422.52 138.5,427.52" fill="#000"/><polygon points="138.5,451.25 144.5,456.25 138.5,461.25" fill="#000"/><rect x="139.2" y="487.98" width="4.3" height="4.3" fill="#dcdcdc"/><polygon points="138.5,518.71 144.5,523.71 138.5,528.71" fill="#000"/><rect x="139.2" y="555.44" width="4.3" height="4.3" fill="#dcdcdc"/><polygon points="138.5,586.1700000000001 144.5,591.1700000000001 138.5,596.1700000000001" fill="#000"/><polygon points="138.5,619.9 144.5,624.9 138.5,629.9" fill="#000"/><polygon points="138.5,653.63 144.5,658.63 138.5,663.63" fill="#000"/><polygon points="138.5,687.36 144.5,692.36 138.5,697.36" fill="#000"/><rect x="139.2" y="724.0899999999999" width="4.3" height="4.3" fill="#dcdcdc"/><polygon points="138.5,754.8199999999999 144.5,759.8199999999999 138.5,764.8199999999999" fill="#000"/><polygon points="138.5,788.55 144.5,793.55 138.5,798.55" fill="#000"/><rect x="139.2" y="825.28" width="4.3" height="4.3" fill="#dcdcdc"/><polygon points="138.5,856.01 144.5,861.01 138.5,866.01" fill="#000"/><polygon points="138.5,889.74 144.5,894.74 138.5,899.74" fill="#000"/><polygon points="138.5,923.4699999999999 144.5,928.4699999999999 138.5,933.4699999999999" fill="#000"/><polygon points="138.5,957.1999999999999 144.5,962.1999999999999 138.5,967.1999999999999" fill="#000"/><rect x="139.2" y="993.93" width="4.3" height="4.3" fill="#dcdcdc"/><polygon points="138.5,1024.6599999999999 144.5,1029.6599999999999 138.5,1034.6599999999999" fill="#000"/>
<polyline points="482.5,338.5 488.2,344.5 494,338.5" fill="none" stroke="#000" stroke-width="1.8"/>
<text x="1160.0" y="31.5" font-size="17.5" fill="#5a58d2" font-weight="bold" text-anchor="start" textLength="94.0" lengthAdjust="spacingAndGlyphs" stroke="#5a58d2" stroke-width="0.6">Username</text><text x="1423.8" y="31.5" font-size="17.5" fill="#5a58d2" font-weight="bold" text-anchor="start" textLength="90.2" lengthAdjust="spacingAndGlyphs" stroke="#5a58d2" stroke-width="0.6">Password</text><text x="1696.0" y="28.8" font-size="16.8" fill="#000" font-weight="normal" text-anchor="start" textLength="50.5" lengthAdjust="spacingAndGlyphs" stroke="#000" stroke-width="0.35">Log in</text><text x="1757.7" y="31.5" font-size="17.8" fill="#5553c8" font-weight="normal" text-anchor="start" textLength="146.3" lengthAdjust="spacingAndGlyphs" stroke="#5553c8" stroke-width="0.1">Forgot Password?</text><text x="1729.5" y="74.2" font-size="22" fill="#5a58d2" font-weight="normal" text-anchor="start" textLength="88.5" lengthAdjust="spacingAndGlyphs" stroke="#5a58d2" stroke-width="0.35">Deutsch</text><text x="1884.0" y="74.2" font-size="22" fill="#e8902e" font-weight="normal" text-anchor="start" textLength="78.0" lengthAdjust="spacingAndGlyphs" stroke="#e8902e" stroke-width="0.35">English</text><text x="1892.0" y="126.0" font-size="23.5" fill="#000" font-weight="normal" text-anchor="start" textLength="75.6" lengthAdjust="spacingAndGlyphs" stroke="#000" stroke-width="0.35">Search</text><text x="412.0" y="269.0" font-size="32" fill="#d4d4d4" font-weight="bold" text-anchor="start" textLength="151.7" lengthAdjust="spacingAndGlyphs" stroke="#d4d4d4" stroke-width="1.0">Textures</text><text x="412.8" y="316.9" font-size="23.5" fill="#d8d8d8" font-weight="bold" text-anchor="start" textLength="191.7" lengthAdjust="spacingAndGlyphs" stroke="#d8d8d8" stroke-width="0.6">Items per page</text><text x="628.1" y="316.9" font-size="23.5" fill="#d8d8d8" font-weight="bold" text-anchor="start" textLength="75.9" lengthAdjust="spacingAndGlyphs" stroke="#d8d8d8" stroke-width="0.6">Offset</text><text x="419.4" y="350.2" font-size="23.5" fill="#000" font-weight="normal" text-anchor="start" textLength="26.9" lengthAdjust="spacingAndGlyphs" stroke="#000" stroke-width="0.35">64</text><text x="634.0" y="351.5" font-size="22.5" fill="#000" font-weight="normal" text-anchor="start" textLength="12.5" lengthAdjust="spacingAndGlyphs" stroke="#000" stroke-width="0.35">0</text><text x="815.3" y="353.6" font-size="22" fill="#000" font-weight="normal" text-anchor="start" textLength="62.3" lengthAdjust="spacingAndGlyphs" stroke="#000" stroke-width="0.35">Apply</text><text x="66.8" y="292.6" font-size="23.5" fill="#ad9e70" font-weight="normal" text-anchor="start" textLength="117.9" lengthAdjust="spacingAndGlyphs" stroke="#ad9e70" stroke-width="0.35">Art (5304)</text><text x="109.6" y="326.3" font-size="23.5" fill="#ad9e70" font-weight="normal" text-anchor="start" textLength="250.8" lengthAdjust="spacingAndGlyphs" stroke="#ad9e70" stroke-width="0.35">Texture Photos (4246)</text><text x="109.6" y="360.1" font-size="23.5" fill="#ad9e70" font-weight="normal" text-anchor="start" textLength="233.8" lengthAdjust="spacingAndGlyphs" stroke="#ad9e70" stroke-width="0.35">Normal Photos (877)</text><text x="109.6" y="393.8" font-size="23.5" fill="#e8902e" font-weight="normal" text-anchor="start" textLength="165.0" lengthAdjust="spacingAndGlyphs" stroke="#e8902e" stroke-width="0.35">Textures (111)</text><text x="151.5" y="427.5" font-size="23.5" fill="#ad9e70" font-weight="normal" text-anchor="start" textLength="124.3" lengthAdjust="spacingAndGlyphs" stroke="#ad9e70" stroke-width="0.35">Asphalt (7)</text><text x="151.5" y="461.2" font-size="23.5" fill="#ad9e70" font-weight="normal" text-anchor="start" textLength="108.4" lengthAdjust="spacingAndGlyphs" stroke="#ad9e70" stroke-width="0.35">Bricks (7)</text><text x="151.5" y="495.0" font-size="23.5" fill="#ad9e70" font-weight="normal" text-anchor="start" textLength="142.4" lengthAdjust="spacingAndGlyphs" stroke="#ad9e70" stroke-width="0.35">Buildings (0)</text><text x="151.5" y="528.7" font-size="23.5" fill="#ad9e70" font-weight="normal" text-anchor="start" textLength="106.9" lengthAdjust="spacingAndGlyphs" stroke="#ad9e70" stroke-width="0.35">Camo (2)</text><text x="151.5" y="562.4" font-size="23.5" fill="#ad9e70" font-weight="normal" text-anchor="start" textLength="115.5" lengthAdjust="spacingAndGlyphs" stroke="#ad9e70" stroke-width="0.35">Carpet (0)</text><text x="151.5" y="596.2" font-size="23.5" fill="#ad9e70" font-weight="normal" text-anchor="start" textLength="116.9" lengthAdjust="spacingAndGlyphs" stroke="#ad9e70" stroke-width="0.35">Ceiling (1)</text><text x="151.5" y="629.9" font-size="23.5" fill="#ad9e70" font-weight="normal" text-anchor="start" textLength="156.8" lengthAdjust="spacingAndGlyphs" stroke="#ad9e70" stroke-width="0.35">Concrete (13)</text><text x="151.5" y="663.6" font-size="23.5" fill="#ad9e70" font-weight="normal" text-anchor="start" textLength="78.4" lengthAdjust="spacingAndGlyphs" stroke="#ad9e70" stroke-width="0.35">Dirt (6)</text><text x="151.5" y="697.4" font-size="23.5" fill="#ad9e70" font-weight="normal" text-anchor="start" textLength="106.9" lengthAdjust="spacingAndGlyphs" stroke="#ad9e70" stroke-width="0.35">Doors (2)</text><text x="151.5" y="731.1" font-size="23.5" fill="#ad9e70" font-weight="normal" text-anchor="start" textLength="109.7" lengthAdjust="spacingAndGlyphs" stroke="#ad9e70" stroke-width="0.35">Fabric (0)</text><text x="151.5" y="764.8" font-size="23.5" fill="#ad9e70" font-weight="normal" text-anchor="start" textLength="124.0" lengthAdjust="spacingAndGlyphs" stroke="#ad9e70" stroke-width="0.35">Facade (2)</text><text x="151.5" y="798.5" font-size="23.5" fill="#ad9e70" font-weight="normal" text-anchor="start" textLength="111.2" lengthAdjust="spacingAndGlyphs" stroke="#ad9e70" stroke-width="0.35">Forest (4)</text><text x="151.5" y="832.3" font-size="23.5" fill="#ad9e70" font-weight="normal" text-anchor="start" textLength="113.5" lengthAdjust="spacingAndGlyphs" stroke="#ad9e70" stroke-width="0.35">Graffiti (0)</text><text x="151.5" y="866.0" font-size="23.5" fill="#ad9e70" font-weight="normal" text-anchor="start" textLength="106.9" lengthAdjust="spacingAndGlyphs" stroke="#ad9e70" stroke-width="0.35">Grass (6)</text><text x="151.5" y="899.7" font-size="23.5" fill="#ad9e70" font-weight="normal" text-anchor="start" textLength="114.0" lengthAdjust="spacingAndGlyphs" stroke="#ad9e70" stroke-width="0.35">Gravel (4)</text><text x="151.5" y="933.5" font-size="23.5" fill="#ad9e70" font-weight="normal" text-anchor="start" textLength="116.9" lengthAdjust="spacingAndGlyphs" stroke="#ad9e70" stroke-width="0.35">Marble (1)</text><text x="151.5" y="967.2" font-size="23.5" fill="#ad9e70" font-weight="normal" text-anchor="start" textLength="101.2" lengthAdjust="spacingAndGlyphs" stroke="#ad9e70" stroke-width="0.35">Metal (8)</text><text x="151.5" y="1000.9" font-size="23.5" fill="#ad9e70" font-weight="normal" text-anchor="start" textLength="99.8" lengthAdjust="spacingAndGlyphs" stroke="#ad9e70" stroke-width="0.35">Moss (0)</text><text x="151.5" y="1034.7" font-size="23.5" fill="#ad9e70" font-weight="normal" text-anchor="start" textLength="106.9" lengthAdjust="spacingAndGlyphs" stroke="#ad9e70" stroke-width="0.35">Mulch (1)</text><text x="541.1" y="631.8" font-size="23" fill="#5856cc" font-weight="normal" text-anchor="middle" textLength="187.6" lengthAdjust="spacingAndGlyphs" stroke="#5856cc" stroke-width="0.35">wood_planks_04</text><text x="807.6" y="631.8" font-size="23" fill="#5856cc" font-weight="normal" text-anchor="middle" textLength="187.6" lengthAdjust="spacingAndGlyphs" stroke="#5856cc" stroke-width="0.35">wood_planks_03</text><text x="1074.2" y="631.8" font-size="23" fill="#5856cc" font-weight="normal" text-anchor="middle" textLength="187.6" lengthAdjust="spacingAndGlyphs" stroke="#5856cc" stroke-width="0.35">wood_planks_02</text><text x="1340.8" y="631.8" font-size="23" fill="#5856cc" font-weight="normal" text-anchor="middle" textLength="187.6" lengthAdjust="spacingAndGlyphs" stroke="#5856cc" stroke-width="0.35">wood_planks_01</text><text x="1607.3" y="631.8" font-size="23" fill="#5856cc" font-weight="normal" text-anchor="middle" textLength="209.9" lengthAdjust="spacingAndGlyphs" stroke="#5856cc" stroke-width="0.35">wood_laminate_01</text><text x="541.1" y="899.0" font-size="23" fill="#5856cc" font-weight="normal" text-anchor="middle" textLength="162.6" lengthAdjust="spacingAndGlyphs" stroke="#5856cc" stroke-width="0.35">wood_dirty_02</text><text x="807.6" y="899.0" font-size="23" fill="#5856cc" font-weight="normal" text-anchor="middle" textLength="162.6" lengthAdjust="spacingAndGlyphs" stroke="#5856cc" stroke-width="0.35">wood_dirty_01</text><text x="1074.2" y="899.0" font-size="23" fill="#5856cc" font-weight="normal" text-anchor="middle" textLength="225.2" lengthAdjust="spacingAndGlyphs" stroke="#5856cc" stroke-width="0.35">wood_chipboard_02</text><text x="1340.8" y="899.0" font-size="23" fill="#5856cc" font-weight="normal" text-anchor="middle" textLength="225.2" lengthAdjust="spacingAndGlyphs" stroke="#5856cc" stroke-width="0.35">wood_chipboard_01</text><text x="1607.3" y="899.0" font-size="23" fill="#5856cc" font-weight="normal" text-anchor="middle" textLength="204.3" lengthAdjust="spacingAndGlyphs" stroke="#5856cc" stroke-width="0.35">wallpaper_odd_01</text>
</svg>
</body></html>
